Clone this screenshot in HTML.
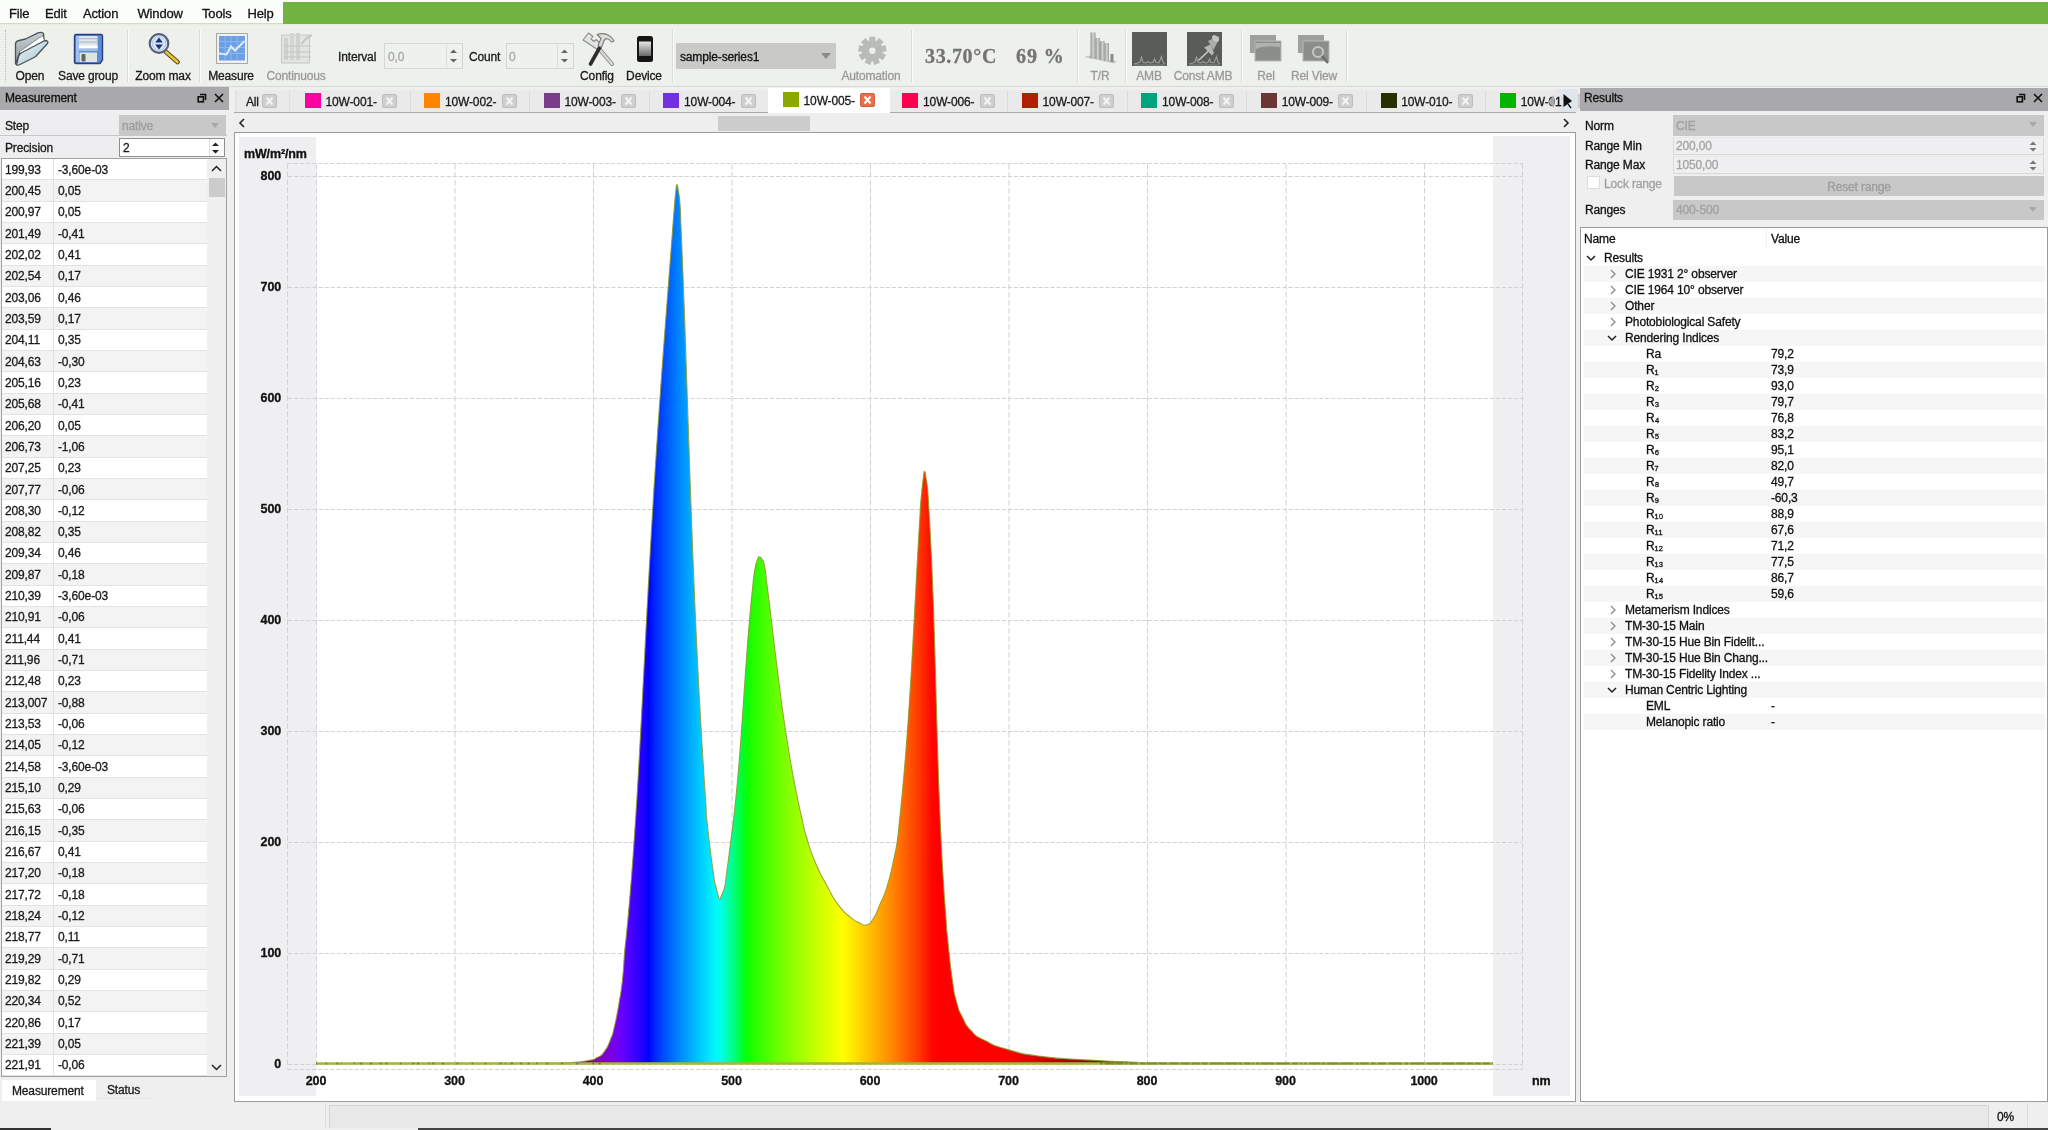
<!DOCTYPE html>
<html><head><meta charset="utf-8"><style>
*{margin:0;padding:0;box-sizing:border-box}
html,body{width:2048px;height:1130px;overflow:hidden;background:#f0eff0;font-family:"Liberation Sans",sans-serif;color:#1a1a1a}
#root{position:absolute;left:0;top:0;width:2048px;height:1130px;will-change:transform;-webkit-font-smoothing:antialiased}
.a{position:absolute}
.t{position:absolute;white-space:nowrap;font-size:12px;line-height:14px;-webkit-text-stroke:0.3px currentColor;letter-spacing:-0.15px}
.tb{position:absolute;white-space:nowrap;font-size:12px;line-height:14px;text-align:center;-webkit-text-stroke:0.3px currentColor;letter-spacing:-0.15px}
.dis{color:#9a9a9a}
</style></head><body><div id="root">
<div class="a" style="left:0;top:0;width:2048px;height:24px;background:#fbfdfb"></div>
<div class="a" style="left:283px;top:2px;width:1765px;height:22px;background:#71b341"></div>
<div class="a" style="left:0;top:23px;width:283px;height:1px;background:#cfdcc6"></div>
<div class="t" style="left:9px;top:6px;font-size:13px;line-height:15px;color:#111">File</div>
<div class="t" style="left:45px;top:6px;font-size:13px;line-height:15px;color:#111">Edit</div>
<div class="t" style="left:83px;top:6px;font-size:13px;line-height:15px;color:#111">Action</div>
<div class="t" style="left:137.5px;top:6px;font-size:13px;line-height:15px;color:#111">Window</div>
<div class="t" style="left:202px;top:6px;font-size:13px;line-height:15px;color:#111">Tools</div>
<div class="t" style="left:247.5px;top:6px;font-size:13px;line-height:15px;color:#111">Help</div>
<div class="a" style="left:0;top:24px;width:2048px;height:62px;background:#eef0ec"></div>
<div class="a" style="left:0;top:24px;width:2048px;height:1px;background:#e2f0d8"></div>
<div class="a" style="left:0;top:86px;width:2048px;height:1px;background:#d8d8d8"></div>
<div class="a" style="left:5px;top:30px;width:1px;height:52px;border-left:1px dotted #b8b8b8"></div>
<div class="a" style="left:127px;top:30px;width:1px;height:52px;background:#dadcd8"></div>
<div class="a" style="left:128px;top:30px;width:1px;height:52px;background:#fafbfa"></div>
<div class="a" style="left:199px;top:30px;width:1px;height:52px;background:#dadcd8"></div>
<div class="a" style="left:200px;top:30px;width:1px;height:52px;background:#fafbfa"></div>
<div class="a" style="left:672px;top:30px;width:1px;height:52px;background:#dadcd8"></div>
<div class="a" style="left:673px;top:30px;width:1px;height:52px;background:#fafbfa"></div>
<div class="a" style="left:911px;top:30px;width:1px;height:52px;background:#dadcd8"></div>
<div class="a" style="left:912px;top:30px;width:1px;height:52px;background:#fafbfa"></div>
<div class="a" style="left:1077px;top:30px;width:1px;height:52px;background:#dadcd8"></div>
<div class="a" style="left:1078px;top:30px;width:1px;height:52px;background:#fafbfa"></div>
<div class="a" style="left:1125px;top:30px;width:1px;height:52px;background:#dadcd8"></div>
<div class="a" style="left:1126px;top:30px;width:1px;height:52px;background:#fafbfa"></div>
<div class="a" style="left:1241px;top:30px;width:1px;height:52px;background:#dadcd8"></div>
<div class="a" style="left:1242px;top:30px;width:1px;height:52px;background:#fafbfa"></div>
<div class="a" style="left:1346px;top:30px;width:1px;height:52px;background:#dadcd8"></div>
<div class="a" style="left:1347px;top:30px;width:1px;height:52px;background:#fafbfa"></div>
<div class="tb" style="left:-30px;width:120px;top:69px;color:#1a1a1a">Open</div>
<div class="tb" style="left:28px;width:120px;top:69px;color:#1a1a1a">Save group</div>
<div class="tb" style="left:103px;width:120px;top:69px;color:#1a1a1a">Zoom max</div>
<div class="tb" style="left:171px;width:120px;top:69px;color:#1a1a1a">Measure</div>
<div class="tb" style="left:236px;width:120px;top:69px;color:#9a9a9a">Continuous</div>
<div class="tb" style="left:537px;width:120px;top:69px;color:#1a1a1a">Config</div>
<div class="tb" style="left:584px;width:120px;top:69px;color:#1a1a1a">Device</div>
<div class="tb" style="left:811px;width:120px;top:69px;color:#9a9a9a">Automation</div>
<div class="tb" style="left:1040px;width:120px;top:69px;color:#9a9a9a">T/R</div>
<div class="tb" style="left:1089px;width:120px;top:69px;color:#9a9a9a">AMB</div>
<div class="tb" style="left:1143px;width:120px;top:69px;color:#9a9a9a">Const AMB</div>
<div class="tb" style="left:1206px;width:120px;top:69px;color:#9a9a9a">Rel</div>
<div class="tb" style="left:1254px;width:120px;top:69px;color:#9a9a9a">Rel View</div>
<svg class="a" style="left:14px;top:31px" width="36" height="36" viewBox="0 0 36 36">
<defs><linearGradient id="fo" x1="0" y1="0" x2="1" y2="1"><stop offset="0" stop-color="#f2f6f8"/><stop offset="1" stop-color="#9cc4d0"/></linearGradient>
<linearGradient id="fb" x1="0" y1="0" x2="0" y2="1"><stop offset="0" stop-color="#c8d0d4"/><stop offset="1" stop-color="#8e9aa0"/></linearGradient></defs>
<path d="M1.5 33 L1.5 12.5 Q2 10 5 9.5 L11.5 8 L24 1.8 Q27.5 0.8 29.5 2.5 L30 8 L30 10 L6 21 Z" fill="url(#fb)" stroke="#4a5358" stroke-width="1.3" stroke-linejoin="round"/>
<path d="M5 21 L28.5 4.5 L30.5 9.5 L8 23 Z" fill="#ffffff" stroke="#6a7378" stroke-width=".8"/>
<path d="M2.5 34 Q4 34.5 6 33.5 L20 26.5 Q22 25.5 23.5 23.5 L33.5 12.5 Q34.5 10.5 32.5 9.5 L30 10 L8 21.5 Q5.5 23 4.5 25.5 Z" fill="url(#fo)" stroke="#4a5358" stroke-width="1.3" stroke-linejoin="round"/>
</svg>
<svg class="a" style="left:73px;top:33px" width="31" height="32" viewBox="0 0 31 32">
<path d="M1.5 3 Q1.5 1.5 3 1.5 L28 1.5 Q29.5 1.5 29.5 3 L29.5 27 L27 30.5 L3 30.5 Q1.5 30.5 1.5 29 Z" fill="#5a8ed8" stroke="#2c3f78" stroke-width="1.4"/>
<rect x="3" y="3" width="3" height="26" fill="#9cc0f0"/>
<rect x="6" y="3" width="18.5" height="14.5" fill="#dfe5e8"/>
<rect x="6" y="5" width="18.5" height="1.2" fill="#b5c0c6"/>
<rect x="6" y="8.5" width="18.5" height="1.2" fill="#b5c0c6"/>
<rect x="6" y="12.5" width="18.5" height="2.5" fill="#ffffff"/>
<rect x="6" y="15.5" width="18.5" height="2" fill="#9ec0e0"/>
<rect x="6.5" y="19.5" width="17.5" height="9.5" fill="#dfe3e5"/>
<rect x="8.5" y="21" width="4" height="7.5" rx="1" fill="#5f666c"/>
</svg>
<svg class="a" style="left:148px;top:33px" width="33" height="32" viewBox="0 0 33 32">
<line x1="18" y1="19" x2="29.5" y2="29" stroke="#5a4a18" stroke-width="4.6" stroke-linecap="round"/>
<line x1="18" y1="19" x2="29.5" y2="29" stroke="#e9c53c" stroke-width="2.6" stroke-linecap="round"/>
<circle cx="11" cy="10.5" r="9.3" fill="#e6eef8" stroke="#565c7a" stroke-width="2.2"/>
<circle cx="11" cy="10.5" r="6.8" fill="#d4e6f6" stroke="#a8c4e4" stroke-width="1"/>
<path d="M11 4.5 L14.8 9.5 H7.2Z M11 16.5 L14.8 11.5 H7.2Z" fill="#1a3278"/>
</svg>
<svg class="a" style="left:216px;top:33px" width="32" height="31" viewBox="0 0 32 31">
<rect x="0.5" y="0.5" width="31" height="30" fill="#f0f0f0" stroke="#a8a8a8" stroke-width="1"/>
<rect x="3" y="3" width="26" height="24.5" fill="#6c9fe6"/>
<path d="M3 8.5H29M3 14.5H29M3 20.5H29M9 3V27.5M15 3V27.5M21 3V27.5" stroke="#8cb8f0" stroke-width=".9"/>
<path d="M3 20.5 L10.5 21.5 L15 13.5 L19 17.5 L28.5 8" fill="none" stroke="#dfeaff" stroke-width="2"/>
</svg>
<svg class="a" style="left:281px;top:32px" width="33" height="32" viewBox="0 0 33 32">
<rect x="0.5" y="3" width="28" height="28" fill="#e2e4e2" stroke="#c6c8c6"/>
<rect x="3" y="6" width="4" height="22" fill="#cfd1cf"/><rect x="9" y="1" width="4" height="27" fill="#d4d6d4"/>
<rect x="15" y="1" width="4" height="27" fill="#d0d2d0"/>
<path d="M3 14H30M3 20H30M3 25H30" stroke="#c4c6c4" stroke-width="1.2"/>
<path d="M20 12 L26 6 L31 3" fill="none" stroke="#c0c2c0" stroke-width="1.6"/>
</svg>
<svg class="a" style="left:581px;top:31px" width="36" height="36" viewBox="0 0 36 36">
<path d="M17.5 17 L31 33" stroke="#8e8e8e" stroke-width="4.2" stroke-linecap="round"/>
<path d="M17.5 17 L31 33" stroke="#d8d8d8" stroke-width="2.4" stroke-linecap="round"/>
<path d="M2 9 L7.5 2 L12 5.5 L10 8 L13 10.5 L15 8.5 L20 13 L16.5 18.5 Z" fill="#e4e4e4" stroke="#8a8a8a" stroke-width="1.1" stroke-linejoin="round"/>
<path d="M19 16 L9.5 33" stroke="#2e2e2e" stroke-width="3.6" stroke-linecap="round"/>
<path d="M16 3.5 Q22 1.5 27 4 Q31 6 33 10 L30.5 11 Q28.5 8 25 7.5 L23 9.5 L20.5 16.5 L17 14.5 L20 7.5 Z" fill="#dcdcdc" stroke="#7a7a7a" stroke-width="1.1" stroke-linejoin="round"/>
</svg>
<svg class="a" style="left:636px;top:35px" width="18" height="28" viewBox="0 0 18 28">
<defs><linearGradient id="dv" x1="0" y1="0" x2="0" y2="1"><stop offset="0" stop-color="#e8e8e8"/><stop offset="1" stop-color="#6a6a6a"/></linearGradient></defs>
<rect x="1" y="1" width="16" height="26" rx="2.5" fill="#151515"/>
<rect x="3" y="6.5" width="12" height="14.5" fill="url(#dv)"/>
</svg>
<svg class="a" style="left:857px;top:36px" width="31" height="30" viewBox="0 0 31 30"><g transform="translate(15.3 14.7)" fill="#b9bbb7"><circle r="10.5"/><rect x="-3" y="-14" width="6" height="6" transform="rotate(0)"/><rect x="-3" y="-14" width="6" height="6" transform="rotate(40)"/><rect x="-3" y="-14" width="6" height="6" transform="rotate(80)"/><rect x="-3" y="-14" width="6" height="6" transform="rotate(120)"/><rect x="-3" y="-14" width="6" height="6" transform="rotate(160)"/><rect x="-3" y="-14" width="6" height="6" transform="rotate(200)"/><rect x="-3" y="-14" width="6" height="6" transform="rotate(240)"/><rect x="-3" y="-14" width="6" height="6" transform="rotate(280)"/><rect x="-3" y="-14" width="6" height="6" transform="rotate(320)"/></g><circle cx="15.3" cy="14.7" r="3.2" fill="#eef0ec"/></svg>
<svg class="a" style="left:1084px;top:32px" width="34" height="34" viewBox="0 0 34 34">
<defs><linearGradient id="trg" x1="0" y1="0" x2="1" y2="0"><stop offset="0" stop-color="#8e908e"/><stop offset=".5" stop-color="#d4d6d4"/><stop offset="1" stop-color="#9a9c9a"/></linearGradient></defs>
<path d="M0.5 25 L4 23.5 L33 29.5 L30 31.5 Z" fill="#c4c6c4"/>
<rect x="6.5" y="0.5" width="5" height="26" fill="url(#trg)"/>
<rect x="11.5" y="6" width="4.5" height="21" fill="url(#trg)"/>
<rect x="16" y="9" width="4.5" height="19" fill="url(#trg)"/>
<rect x="20.5" y="11" width="4.5" height="18" fill="url(#trg)"/>
<rect x="26.5" y="22" width="3" height="8" fill="#8a8c8a"/>
</svg>
<svg class="a" style="left:1132px;top:32px" width="35" height="35" viewBox="0 0 35 35">
<rect x="0" y="0" width="35" height="34" fill="#585d57"/>
<path d="M2 32 L6 31 L8 30 L9.5 25 L11 30.5 L14 31 L16 29.5 L18 31 L21 30.5 L22.5 27 L24 30.5 L27 31 L29.5 24.5 L31 30.5 L33 32" fill="none" stroke="#9a9e9a" stroke-width="1.1"/><path d="M2 33 H33" stroke="#7e827e" stroke-width="1.2"/>
</svg>
<svg class="a" style="left:1187px;top:32px" width="35" height="35" viewBox="0 0 35 35">
<rect x="0" y="0" width="35" height="34" fill="#585d57"/>
<path d="M2 32 L6 31 L8 30 L9.5 25 L11 30.5 L14 31 L16 29.5 L18 31 L21 30.5 L22.5 27 L24 30.5 L27 31 L29.5 24.5 L31 30.5 L33 32" fill="none" stroke="#9a9e9a" stroke-width="1.1"/><path d="M2 33 H33" stroke="#7e827e" stroke-width="1.2"/>
<path d="M21.5 19 L12 28" stroke="#c8ccc8" stroke-width="1.6" stroke-linecap="round"/>
<path d="M17 15.5 L25 23.5 L27 21 L23.5 12.5 Z" fill="#b4b8b4"/>
<path d="M21 9 L31 4 Q33 5 31.5 8 L26.5 18 Z" fill="#a9ada9"/>
<ellipse cx="28.5" cy="6.5" rx="4" ry="2.6" transform="rotate(45 28.5 6.5)" fill="#c4c8c4"/>
</svg>
<svg class="a" style="left:1250px;top:35px" width="32" height="27" viewBox="0 0 32 27">
<rect x="0" y="0" width="26" height="18" fill="#9ea09e"/>
<rect x="5" y="6" width="26" height="20" fill="#8c8e8c" stroke="#b8bab8"/>
<path d="M6 14 Q15 10 30 12 L30 8 L6 8Z" fill="#b0b2b0"/>
</svg>
<svg class="a" style="left:1298px;top:35px" width="33" height="30" viewBox="0 0 33 30">
<rect x="0" y="0" width="26" height="18" fill="#9ea09e"/>
<rect x="5" y="6" width="26" height="20" fill="#8c8e8c" stroke="#b8bab8"/>
<circle cx="20" cy="17" r="5" fill="none" stroke="#c4c6c4" stroke-width="2"/>
<line x1="24" y1="21" x2="30" y2="28" stroke="#6a6c6a" stroke-width="2.5"/>
</svg>
<div class="t" style="left:338px;top:50px">Interval</div>
<div class="a" style="left:384px;top:43px;width:79px;height:26px;border:1px solid #d4d6d2;background:#eff1ed"></div>
<div class="t dis" style="left:388px;top:50px;color:#a8a8a8">0,0</div>
<div class="t" style="left:469px;top:50px">Count</div>
<div class="a" style="left:506px;top:43px;width:68px;height:26px;border:1px solid #d4d6d2;background:#eff1ed"></div>
<div class="t dis" style="left:509px;top:50px;color:#a8a8a8">0</div>
<div class="a" style="left:446px;top:45px;width:14px;height:22px;border-left:1px solid #dcdcdc"></div>
<svg class="a" style="left:449px;top:48px" width="9" height="16" viewBox="0 0 9 16"><path d="M1 5 L4.5 1.5 L8 5Z M1 11 L4.5 14.5 L8 11Z" fill="#666"/></svg>
<div class="a" style="left:557px;top:45px;width:14px;height:22px;border-left:1px solid #dcdcdc"></div>
<svg class="a" style="left:560px;top:48px" width="9" height="16" viewBox="0 0 9 16"><path d="M1 5 L4.5 1.5 L8 5Z M1 11 L4.5 14.5 L8 11Z" fill="#666"/></svg>
<div class="a" style="left:676px;top:43px;width:160px;height:26px;background:#c9cac7"></div>
<div class="t" style="left:680px;top:50px;color:#111">sample-series1</div>
<svg class="a" style="left:821px;top:53px" width="10" height="6" viewBox="0 0 10 6"><path d="M0 0 L10 0 L5 6Z" fill="#8a8a8a"/></svg>
<div class="t" style="left:925px;top:45px;font-family:'Liberation Serif',serif;font-size:20px;line-height:22px;font-weight:bold;letter-spacing:0.65px;color:#747474">33.70°C</div>
<div class="t" style="left:1016px;top:45px;font-family:'Liberation Serif',serif;font-size:20px;line-height:22px;font-weight:bold;letter-spacing:0.9px;color:#747474">69 %</div>
<div class="a" style="left:0;top:87px;width:229px;height:23px;background:#a9a8aa"></div>
<div class="t" style="left:5px;top:91px;color:#111">Measurement</div>
<svg class="a" style="left:197px;top:93px" width="10" height="10" viewBox="0 0 10 10"><path d="M3 1.5H8.5V7" fill="none" stroke="#111" stroke-width="1.6"/><rect x="1.2" y="3.8" width="5.2" height="5" fill="none" stroke="#111" stroke-width="1.6"/></svg><svg class="a" style="left:214px;top:93px" width="10" height="10" viewBox="0 0 10 10"><path d="M1 1L9 9M9 1L1 9" stroke="#111" stroke-width="1.6"/></svg>
<div class="a" style="left:0;top:113px;width:119px;height:23px;background:#eeedef"></div>
<div class="a" style="left:0;top:135px;width:227px;height:1px;background:#c8c8c8"></div>
<div class="t" style="left:5px;top:119px">Step</div>
<div class="a" style="left:119px;top:115px;width:107px;height:20px;background:#c9c8c9"></div>
<div class="t" style="left:122px;top:119px;color:#9c9c9c">native</div>
<svg class="a" style="left:211px;top:123px" width="8" height="5" viewBox="0 0 8 5"><path d="M0 0H8L4 5Z" fill="#a8a8a8"/></svg>
<div class="a" style="left:0;top:137px;width:119px;height:20px;background:#eeedef"></div>
<div class="t" style="left:5px;top:141px">Precision</div>
<div class="a" style="left:119px;top:138px;width:106px;height:19px;background:#fff;border:1px solid #8e8e8e"></div>
<div class="t" style="left:123px;top:141px">2</div>
<div class="a" style="left:209px;top:139px;width:15px;height:17px;border-left:1px solid #e0e0e0;background:#fafafa"></div>
<svg class="a" style="left:211px;top:141px" width="9" height="14" viewBox="0 0 9 14"><path d="M1 5 L4.5 1.5 L8 5Z M1 9 L4.5 12.5 L8 9Z" fill="#222"/></svg>
<div class="a" style="left:1px;top:158px;width:226px;height:919px;background:#fff;border:1px solid #a0a0a0"></div>
<div class="a" style="left:2px;top:159.00px;width:205px;height:21.33px;background:#ffffff;border-bottom:1px solid #e2e2e2"></div>
<div class="t" style="left:5px;top:162.50px">199,93</div>
<div class="t" style="left:58px;top:162.50px">-3,60e-03</div>
<div class="a" style="left:2px;top:180.33px;width:205px;height:21.33px;background:#f4f3f4;border-bottom:1px solid #e2e2e2"></div>
<div class="t" style="left:5px;top:183.83px">200,45</div>
<div class="t" style="left:58px;top:183.83px">0,05</div>
<div class="a" style="left:2px;top:201.67px;width:205px;height:21.33px;background:#ffffff;border-bottom:1px solid #e2e2e2"></div>
<div class="t" style="left:5px;top:205.17px">200,97</div>
<div class="t" style="left:58px;top:205.17px">0,05</div>
<div class="a" style="left:2px;top:223.00px;width:205px;height:21.33px;background:#f4f3f4;border-bottom:1px solid #e2e2e2"></div>
<div class="t" style="left:5px;top:226.50px">201,49</div>
<div class="t" style="left:58px;top:226.50px">-0,41</div>
<div class="a" style="left:2px;top:244.33px;width:205px;height:21.33px;background:#ffffff;border-bottom:1px solid #e2e2e2"></div>
<div class="t" style="left:5px;top:247.83px">202,02</div>
<div class="t" style="left:58px;top:247.83px">0,41</div>
<div class="a" style="left:2px;top:265.66px;width:205px;height:21.33px;background:#f4f3f4;border-bottom:1px solid #e2e2e2"></div>
<div class="t" style="left:5px;top:269.16px">202,54</div>
<div class="t" style="left:58px;top:269.16px">0,17</div>
<div class="a" style="left:2px;top:287.00px;width:205px;height:21.33px;background:#ffffff;border-bottom:1px solid #e2e2e2"></div>
<div class="t" style="left:5px;top:290.50px">203,06</div>
<div class="t" style="left:58px;top:290.50px">0,46</div>
<div class="a" style="left:2px;top:308.33px;width:205px;height:21.33px;background:#f4f3f4;border-bottom:1px solid #e2e2e2"></div>
<div class="t" style="left:5px;top:311.83px">203,59</div>
<div class="t" style="left:58px;top:311.83px">0,17</div>
<div class="a" style="left:2px;top:329.66px;width:205px;height:21.33px;background:#ffffff;border-bottom:1px solid #e2e2e2"></div>
<div class="t" style="left:5px;top:333.16px">204,11</div>
<div class="t" style="left:58px;top:333.16px">0,35</div>
<div class="a" style="left:2px;top:351.00px;width:205px;height:21.33px;background:#f4f3f4;border-bottom:1px solid #e2e2e2"></div>
<div class="t" style="left:5px;top:354.50px">204,63</div>
<div class="t" style="left:58px;top:354.50px">-0,30</div>
<div class="a" style="left:2px;top:372.33px;width:205px;height:21.33px;background:#ffffff;border-bottom:1px solid #e2e2e2"></div>
<div class="t" style="left:5px;top:375.83px">205,16</div>
<div class="t" style="left:58px;top:375.83px">0,23</div>
<div class="a" style="left:2px;top:393.66px;width:205px;height:21.33px;background:#f4f3f4;border-bottom:1px solid #e2e2e2"></div>
<div class="t" style="left:5px;top:397.16px">205,68</div>
<div class="t" style="left:58px;top:397.16px">-0,41</div>
<div class="a" style="left:2px;top:415.00px;width:205px;height:21.33px;background:#ffffff;border-bottom:1px solid #e2e2e2"></div>
<div class="t" style="left:5px;top:418.50px">206,20</div>
<div class="t" style="left:58px;top:418.50px">0,05</div>
<div class="a" style="left:2px;top:436.33px;width:205px;height:21.33px;background:#f4f3f4;border-bottom:1px solid #e2e2e2"></div>
<div class="t" style="left:5px;top:439.83px">206,73</div>
<div class="t" style="left:58px;top:439.83px">-1,06</div>
<div class="a" style="left:2px;top:457.66px;width:205px;height:21.33px;background:#ffffff;border-bottom:1px solid #e2e2e2"></div>
<div class="t" style="left:5px;top:461.16px">207,25</div>
<div class="t" style="left:58px;top:461.16px">0,23</div>
<div class="a" style="left:2px;top:479.00px;width:205px;height:21.33px;background:#f4f3f4;border-bottom:1px solid #e2e2e2"></div>
<div class="t" style="left:5px;top:482.50px">207,77</div>
<div class="t" style="left:58px;top:482.50px">-0,06</div>
<div class="a" style="left:2px;top:500.33px;width:205px;height:21.33px;background:#ffffff;border-bottom:1px solid #e2e2e2"></div>
<div class="t" style="left:5px;top:503.83px">208,30</div>
<div class="t" style="left:58px;top:503.83px">-0,12</div>
<div class="a" style="left:2px;top:521.66px;width:205px;height:21.33px;background:#f4f3f4;border-bottom:1px solid #e2e2e2"></div>
<div class="t" style="left:5px;top:525.16px">208,82</div>
<div class="t" style="left:58px;top:525.16px">0,35</div>
<div class="a" style="left:2px;top:542.99px;width:205px;height:21.33px;background:#ffffff;border-bottom:1px solid #e2e2e2"></div>
<div class="t" style="left:5px;top:546.49px">209,34</div>
<div class="t" style="left:58px;top:546.49px">0,46</div>
<div class="a" style="left:2px;top:564.33px;width:205px;height:21.33px;background:#f4f3f4;border-bottom:1px solid #e2e2e2"></div>
<div class="t" style="left:5px;top:567.83px">209,87</div>
<div class="t" style="left:58px;top:567.83px">-0,18</div>
<div class="a" style="left:2px;top:585.66px;width:205px;height:21.33px;background:#ffffff;border-bottom:1px solid #e2e2e2"></div>
<div class="t" style="left:5px;top:589.16px">210,39</div>
<div class="t" style="left:58px;top:589.16px">-3,60e-03</div>
<div class="a" style="left:2px;top:606.99px;width:205px;height:21.33px;background:#f4f3f4;border-bottom:1px solid #e2e2e2"></div>
<div class="t" style="left:5px;top:610.49px">210,91</div>
<div class="t" style="left:58px;top:610.49px">-0,06</div>
<div class="a" style="left:2px;top:628.33px;width:205px;height:21.33px;background:#ffffff;border-bottom:1px solid #e2e2e2"></div>
<div class="t" style="left:5px;top:631.83px">211,44</div>
<div class="t" style="left:58px;top:631.83px">0,41</div>
<div class="a" style="left:2px;top:649.66px;width:205px;height:21.33px;background:#f4f3f4;border-bottom:1px solid #e2e2e2"></div>
<div class="t" style="left:5px;top:653.16px">211,96</div>
<div class="t" style="left:58px;top:653.16px">-0,71</div>
<div class="a" style="left:2px;top:670.99px;width:205px;height:21.33px;background:#ffffff;border-bottom:1px solid #e2e2e2"></div>
<div class="t" style="left:5px;top:674.49px">212,48</div>
<div class="t" style="left:58px;top:674.49px">0,23</div>
<div class="a" style="left:2px;top:692.32px;width:205px;height:21.33px;background:#f4f3f4;border-bottom:1px solid #e2e2e2"></div>
<div class="t" style="left:5px;top:695.82px">213,007</div>
<div class="t" style="left:58px;top:695.82px">-0,88</div>
<div class="a" style="left:2px;top:713.66px;width:205px;height:21.33px;background:#ffffff;border-bottom:1px solid #e2e2e2"></div>
<div class="t" style="left:5px;top:717.16px">213,53</div>
<div class="t" style="left:58px;top:717.16px">-0,06</div>
<div class="a" style="left:2px;top:734.99px;width:205px;height:21.33px;background:#f4f3f4;border-bottom:1px solid #e2e2e2"></div>
<div class="t" style="left:5px;top:738.49px">214,05</div>
<div class="t" style="left:58px;top:738.49px">-0,12</div>
<div class="a" style="left:2px;top:756.32px;width:205px;height:21.33px;background:#ffffff;border-bottom:1px solid #e2e2e2"></div>
<div class="t" style="left:5px;top:759.82px">214,58</div>
<div class="t" style="left:58px;top:759.82px">-3,60e-03</div>
<div class="a" style="left:2px;top:777.66px;width:205px;height:21.33px;background:#f4f3f4;border-bottom:1px solid #e2e2e2"></div>
<div class="t" style="left:5px;top:781.16px">215,10</div>
<div class="t" style="left:58px;top:781.16px">0,29</div>
<div class="a" style="left:2px;top:798.99px;width:205px;height:21.33px;background:#ffffff;border-bottom:1px solid #e2e2e2"></div>
<div class="t" style="left:5px;top:802.49px">215,63</div>
<div class="t" style="left:58px;top:802.49px">-0,06</div>
<div class="a" style="left:2px;top:820.32px;width:205px;height:21.33px;background:#f4f3f4;border-bottom:1px solid #e2e2e2"></div>
<div class="t" style="left:5px;top:823.82px">216,15</div>
<div class="t" style="left:58px;top:823.82px">-0,35</div>
<div class="a" style="left:2px;top:841.66px;width:205px;height:21.33px;background:#ffffff;border-bottom:1px solid #e2e2e2"></div>
<div class="t" style="left:5px;top:845.16px">216,67</div>
<div class="t" style="left:58px;top:845.16px">0,41</div>
<div class="a" style="left:2px;top:862.99px;width:205px;height:21.33px;background:#f4f3f4;border-bottom:1px solid #e2e2e2"></div>
<div class="t" style="left:5px;top:866.49px">217,20</div>
<div class="t" style="left:58px;top:866.49px">-0,18</div>
<div class="a" style="left:2px;top:884.32px;width:205px;height:21.33px;background:#ffffff;border-bottom:1px solid #e2e2e2"></div>
<div class="t" style="left:5px;top:887.82px">217,72</div>
<div class="t" style="left:58px;top:887.82px">-0,18</div>
<div class="a" style="left:2px;top:905.65px;width:205px;height:21.33px;background:#f4f3f4;border-bottom:1px solid #e2e2e2"></div>
<div class="t" style="left:5px;top:909.15px">218,24</div>
<div class="t" style="left:58px;top:909.15px">-0,12</div>
<div class="a" style="left:2px;top:926.99px;width:205px;height:21.33px;background:#ffffff;border-bottom:1px solid #e2e2e2"></div>
<div class="t" style="left:5px;top:930.49px">218,77</div>
<div class="t" style="left:58px;top:930.49px">0,11</div>
<div class="a" style="left:2px;top:948.32px;width:205px;height:21.33px;background:#f4f3f4;border-bottom:1px solid #e2e2e2"></div>
<div class="t" style="left:5px;top:951.82px">219,29</div>
<div class="t" style="left:58px;top:951.82px">-0,71</div>
<div class="a" style="left:2px;top:969.65px;width:205px;height:21.33px;background:#ffffff;border-bottom:1px solid #e2e2e2"></div>
<div class="t" style="left:5px;top:973.15px">219,82</div>
<div class="t" style="left:58px;top:973.15px">0,29</div>
<div class="a" style="left:2px;top:990.99px;width:205px;height:21.33px;background:#f4f3f4;border-bottom:1px solid #e2e2e2"></div>
<div class="t" style="left:5px;top:994.49px">220,34</div>
<div class="t" style="left:58px;top:994.49px">0,52</div>
<div class="a" style="left:2px;top:1012.32px;width:205px;height:21.33px;background:#ffffff;border-bottom:1px solid #e2e2e2"></div>
<div class="t" style="left:5px;top:1015.82px">220,86</div>
<div class="t" style="left:58px;top:1015.82px">0,17</div>
<div class="a" style="left:2px;top:1033.65px;width:205px;height:21.33px;background:#f4f3f4;border-bottom:1px solid #e2e2e2"></div>
<div class="t" style="left:5px;top:1037.15px">221,39</div>
<div class="t" style="left:58px;top:1037.15px">0,05</div>
<div class="a" style="left:2px;top:1054.99px;width:205px;height:21.33px;background:#ffffff;border-bottom:1px solid #e2e2e2"></div>
<div class="t" style="left:5px;top:1058.49px">221,91</div>
<div class="t" style="left:58px;top:1058.49px">-0,06</div>
<div class="a" style="left:53px;top:159px;width:1px;height:917px;background:#e2e2e2"></div>
<div class="a" style="left:207px;top:159px;width:19px;height:917px;background:#f0eff0"></div>
<div class="a" style="left:209px;top:178px;width:16px;height:19px;background:#cdcccd"></div>
<svg class="a" style="left:211px;top:165px" width="11" height="7" viewBox="0 0 11 7"><path d="M1 6L5.5 1.5L10 6" fill="none" stroke="#222" stroke-width="1.5"/></svg>
<svg class="a" style="left:211px;top:1064px" width="11" height="7" viewBox="0 0 11 7"><path d="M1 1L5.5 5.5L10 1" fill="none" stroke="#222" stroke-width="1.5"/></svg>
<div class="a" style="left:2px;top:1080px;width:94px;height:21px;background:#ffffff"></div>
<div class="t" style="left:12px;top:1084px">Measurement</div>
<div class="a" style="left:96px;top:1080px;width:56px;height:19px;background:#f0eff0;border-bottom:1px solid #e6e6e6"></div>
<div class="t" style="left:107px;top:1083px">Status</div>
<div class="a" style="left:234px;top:90px;width:1342px;height:22px;background:#ebeaeb"></div>
<div class="a" style="left:234px;top:112px;width:1342px;height:1px;background:#a8a8a8"></div>
<div class="a" style="left:236px;top:90px;width:54px;height:22px;border-left:1px solid #dedede;border-right:1px solid #dedede"></div>
<div class="t" style="left:246px;top:95px">All</div>
<div class="a" style="left:262px;top:94px;width:15px;height:14px;background:#cfcfcf;border-radius:2px;border:1px solid #bdbdbd"></div><svg class="a" style="left:262px;top:94px" width="15" height="14" viewBox="0 0 15 14"><path d="M4.5 3.5L10.5 10.5M10.5 3.5L4.5 10.5" stroke="#f4f4f4" stroke-width="2"/></svg>
<div class="a" style="left:409.7px;top:91px;width:1px;height:21px;background:#dcdcdc"></div>
<div class="a" style="left:304.8px;top:92.8px;width:16px;height:15.6px;background:#ff00a0"></div>
<div class="t" style="left:325.5px;top:95px">10W-001-</div>
<div class="a" style="left:382px;top:94px;width:15px;height:14px;background:#cfcfcf;border-radius:2px;border:1px solid #bdbdbd"></div><svg class="a" style="left:382px;top:94px" width="15" height="14" viewBox="0 0 15 14"><path d="M4.5 3.5L10.5 10.5M10.5 3.5L4.5 10.5" stroke="#f4f4f4" stroke-width="2"/></svg>
<div class="a" style="left:529.2px;top:91px;width:1px;height:21px;background:#dcdcdc"></div>
<div class="a" style="left:424.3px;top:92.8px;width:16px;height:15.6px;background:#ff8400"></div>
<div class="t" style="left:445.0px;top:95px">10W-002-</div>
<div class="a" style="left:502px;top:94px;width:15px;height:14px;background:#cfcfcf;border-radius:2px;border:1px solid #bdbdbd"></div><svg class="a" style="left:502px;top:94px" width="15" height="14" viewBox="0 0 15 14"><path d="M4.5 3.5L10.5 10.5M10.5 3.5L4.5 10.5" stroke="#f4f4f4" stroke-width="2"/></svg>
<div class="a" style="left:648.7px;top:91px;width:1px;height:21px;background:#dcdcdc"></div>
<div class="a" style="left:543.8px;top:92.8px;width:16px;height:15.6px;background:#7a3d8a"></div>
<div class="t" style="left:564.5px;top:95px">10W-003-</div>
<div class="a" style="left:621px;top:94px;width:15px;height:14px;background:#cfcfcf;border-radius:2px;border:1px solid #bdbdbd"></div><svg class="a" style="left:621px;top:94px" width="15" height="14" viewBox="0 0 15 14"><path d="M4.5 3.5L10.5 10.5M10.5 3.5L4.5 10.5" stroke="#f4f4f4" stroke-width="2"/></svg>
<div class="a" style="left:768.3px;top:91px;width:1px;height:21px;background:#dcdcdc"></div>
<div class="a" style="left:663.4px;top:92.8px;width:16px;height:15.6px;background:#7230de"></div>
<div class="t" style="left:684.1px;top:95px">10W-004-</div>
<div class="a" style="left:741px;top:94px;width:15px;height:14px;background:#cfcfcf;border-radius:2px;border:1px solid #bdbdbd"></div><svg class="a" style="left:741px;top:94px" width="15" height="14" viewBox="0 0 15 14"><path d="M4.5 3.5L10.5 10.5M10.5 3.5L4.5 10.5" stroke="#f4f4f4" stroke-width="2"/></svg>
<div class="a" style="left:768.1px;top:88px;width:122px;height:25px;background:#ffffff"></div>
<div class="a" style="left:782.9px;top:91.8px;width:16px;height:15.6px;background:#8aa800"></div>
<div class="t" style="left:803.6px;top:94px">10W-005-</div>
<div class="a" style="left:860px;top:93px;width:15px;height:14px;background:#e8704a;border-radius:2px;border:1px solid #d0603a"></div><svg class="a" style="left:860px;top:93px" width="15" height="14" viewBox="0 0 15 14"><path d="M4.5 3.5L10.5 10.5M10.5 3.5L4.5 10.5" stroke="#fff" stroke-width="2"/></svg>
<div class="a" style="left:1007.3px;top:91px;width:1px;height:21px;background:#dcdcdc"></div>
<div class="a" style="left:902.4px;top:92.8px;width:16px;height:15.6px;background:#ff0050"></div>
<div class="t" style="left:923.1px;top:95px">10W-006-</div>
<div class="a" style="left:980px;top:94px;width:15px;height:14px;background:#cfcfcf;border-radius:2px;border:1px solid #bdbdbd"></div><svg class="a" style="left:980px;top:94px" width="15" height="14" viewBox="0 0 15 14"><path d="M4.5 3.5L10.5 10.5M10.5 3.5L4.5 10.5" stroke="#f4f4f4" stroke-width="2"/></svg>
<div class="a" style="left:1126.8px;top:91px;width:1px;height:21px;background:#dcdcdc"></div>
<div class="a" style="left:1021.9px;top:92.8px;width:16px;height:15.6px;background:#b02000"></div>
<div class="t" style="left:1042.6px;top:95px">10W-007-</div>
<div class="a" style="left:1099px;top:94px;width:15px;height:14px;background:#cfcfcf;border-radius:2px;border:1px solid #bdbdbd"></div><svg class="a" style="left:1099px;top:94px" width="15" height="14" viewBox="0 0 15 14"><path d="M4.5 3.5L10.5 10.5M10.5 3.5L4.5 10.5" stroke="#f4f4f4" stroke-width="2"/></svg>
<div class="a" style="left:1246.3px;top:91px;width:1px;height:21px;background:#dcdcdc"></div>
<div class="a" style="left:1141.4px;top:92.8px;width:16px;height:15.6px;background:#00a67a"></div>
<div class="t" style="left:1162.1px;top:95px">10W-008-</div>
<div class="a" style="left:1219px;top:94px;width:15px;height:14px;background:#cfcfcf;border-radius:2px;border:1px solid #bdbdbd"></div><svg class="a" style="left:1219px;top:94px" width="15" height="14" viewBox="0 0 15 14"><path d="M4.5 3.5L10.5 10.5M10.5 3.5L4.5 10.5" stroke="#f4f4f4" stroke-width="2"/></svg>
<div class="a" style="left:1365.9px;top:91px;width:1px;height:21px;background:#dcdcdc"></div>
<div class="a" style="left:1261.0px;top:92.8px;width:16px;height:15.6px;background:#6e3535"></div>
<div class="t" style="left:1281.7px;top:95px">10W-009-</div>
<div class="a" style="left:1338px;top:94px;width:15px;height:14px;background:#cfcfcf;border-radius:2px;border:1px solid #bdbdbd"></div><svg class="a" style="left:1338px;top:94px" width="15" height="14" viewBox="0 0 15 14"><path d="M4.5 3.5L10.5 10.5M10.5 3.5L4.5 10.5" stroke="#f4f4f4" stroke-width="2"/></svg>
<div class="a" style="left:1485.4px;top:91px;width:1px;height:21px;background:#dcdcdc"></div>
<div class="a" style="left:1380.5px;top:92.8px;width:16px;height:15.6px;background:#283000"></div>
<div class="t" style="left:1401.2px;top:95px">10W-010-</div>
<div class="a" style="left:1458px;top:94px;width:15px;height:14px;background:#cfcfcf;border-radius:2px;border:1px solid #bdbdbd"></div><svg class="a" style="left:1458px;top:94px" width="15" height="14" viewBox="0 0 15 14"><path d="M4.5 3.5L10.5 10.5M10.5 3.5L4.5 10.5" stroke="#f4f4f4" stroke-width="2"/></svg>
<div class="a" style="left:1604.9px;top:91px;width:1px;height:21px;background:#dcdcdc"></div>
<div class="a" style="left:1500.0px;top:92.8px;width:16px;height:15.6px;background:#00b400"></div>
<div class="t" style="left:1520.7px;top:95px">10W-011-</div>
<div class="a" style="left:1577px;top:94px;width:15px;height:14px;background:#cfcfcf;border-radius:2px;border:1px solid #bdbdbd"></div><svg class="a" style="left:1577px;top:94px" width="15" height="14" viewBox="0 0 15 14"><path d="M4.5 3.5L10.5 10.5M10.5 3.5L4.5 10.5" stroke="#f4f4f4" stroke-width="2"/></svg>
<div class="a" style="left:1553px;top:89px;width:25px;height:23px;background:linear-gradient(90deg,rgba(230,236,240,0.2),#dde4ea 40%,#dfe6ec)"></div>
<svg class="a" style="left:1546px;top:93px" width="10" height="16" viewBox="0 0 10 16"><path d="M8 2 L2 9 L8 15Z" fill="#a8a8a8"/></svg>
<div class="t" style="left:1555px;top:95px">1</div>
<svg class="a" style="left:1562px;top:92px" width="12" height="18" viewBox="0 0 12 18"><path d="M1.5 2 L1.5 15 L10 9Z" fill="#111"/><path d="M6 12 L9 16" stroke="#111" stroke-width="1.3"/></svg>
<div class="a" style="left:234px;top:113px;width:1342px;height:19px;background:#efeeef"></div>
<div class="a" style="left:718px;top:116px;width:92px;height:15px;background:#cdcccd"></div>
<svg class="a" style="left:238px;top:118px" width="8" height="10" viewBox="0 0 8 10"><path d="M6 1L2 5L6 9" fill="none" stroke="#222" stroke-width="1.6"/></svg>
<svg class="a" style="left:1562px;top:118px" width="8" height="10" viewBox="0 0 8 10"><path d="M2 1L6 5L2 9" fill="none" stroke="#222" stroke-width="1.6"/></svg>
<div class="a" style="left:234px;top:131.5px;width:1342px;height:1px;background:#9a9a9a"></div>
<div class="a" style="left:234px;top:132.5px;width:1342px;height:969px;background:#fff;border:1px solid #9c9c9c;border-top:none"></div>
<div class="a" style="left:239px;top:137px;width:77px;height:959px;background:#efeef0"></div>
<div class="a" style="left:1493px;top:136px;width:77px;height:960px;background:#efeef0"></div>
<svg class="a" style="left:0;top:0" width="2048" height="1130" viewBox="0 0 2048 1130">
<defs><linearGradient id="spec" gradientUnits="userSpaceOnUse" x1="316.0" y1="0" x2="1493.0" y2="0"><stop offset="0.1647" stop-color="rgb(0,0,0)"/><stop offset="0.1694" stop-color="rgb(0,0,0)"/><stop offset="0.1742" stop-color="rgb(0,0,0)"/><stop offset="0.1789" stop-color="rgb(0,0,0)"/><stop offset="0.1836" stop-color="rgb(0,0,0)"/><stop offset="0.1883" stop-color="rgb(0,0,0)"/><stop offset="0.1930" stop-color="rgb(0,0,0)"/><stop offset="0.1977" stop-color="rgb(0,0,0)"/><stop offset="0.2024" stop-color="rgb(0,0,0)"/><stop offset="0.2071" stop-color="rgb(0,0,0)"/><stop offset="0.2118" stop-color="rgb(97,0,97)"/><stop offset="0.2165" stop-color="rgb(109,0,115)"/><stop offset="0.2212" stop-color="rgb(118,0,132)"/><stop offset="0.2259" stop-color="rgb(124,0,149)"/><stop offset="0.2306" stop-color="rgb(129,0,165)"/><stop offset="0.2353" stop-color="rgb(131,0,181)"/><stop offset="0.2401" stop-color="rgb(130,0,196)"/><stop offset="0.2448" stop-color="rgb(128,0,211)"/><stop offset="0.2495" stop-color="rgb(123,0,226)"/><stop offset="0.2542" stop-color="rgb(116,0,241)"/><stop offset="0.2589" stop-color="rgb(106,0,255)"/><stop offset="0.2636" stop-color="rgb(89,0,255)"/><stop offset="0.2683" stop-color="rgb(70,0,255)"/><stop offset="0.2730" stop-color="rgb(51,0,255)"/><stop offset="0.2777" stop-color="rgb(29,0,255)"/><stop offset="0.2824" stop-color="rgb(0,0,255)"/><stop offset="0.2871" stop-color="rgb(0,34,255)"/><stop offset="0.2918" stop-color="rgb(0,59,255)"/><stop offset="0.2965" stop-color="rgb(0,81,255)"/><stop offset="0.3012" stop-color="rgb(0,102,255)"/><stop offset="0.3059" stop-color="rgb(0,123,255)"/><stop offset="0.3107" stop-color="rgb(0,142,255)"/><stop offset="0.3154" stop-color="rgb(0,160,255)"/><stop offset="0.3201" stop-color="rgb(0,178,255)"/><stop offset="0.3248" stop-color="rgb(0,196,255)"/><stop offset="0.3295" stop-color="rgb(0,213,255)"/><stop offset="0.3342" stop-color="rgb(0,230,255)"/><stop offset="0.3389" stop-color="rgb(0,247,255)"/><stop offset="0.3436" stop-color="rgb(0,255,234)"/><stop offset="0.3483" stop-color="rgb(0,255,192)"/><stop offset="0.3530" stop-color="rgb(0,255,146)"/><stop offset="0.3577" stop-color="rgb(0,255,97)"/><stop offset="0.3624" stop-color="rgb(0,255,40)"/><stop offset="0.3671" stop-color="rgb(15,255,0)"/><stop offset="0.3718" stop-color="rgb(36,255,0)"/><stop offset="0.3766" stop-color="rgb(54,255,0)"/><stop offset="0.3813" stop-color="rgb(70,255,0)"/><stop offset="0.3860" stop-color="rgb(86,255,0)"/><stop offset="0.3907" stop-color="rgb(101,255,0)"/><stop offset="0.3954" stop-color="rgb(115,255,0)"/><stop offset="0.4001" stop-color="rgb(129,255,0)"/><stop offset="0.4048" stop-color="rgb(143,255,0)"/><stop offset="0.4095" stop-color="rgb(156,255,0)"/><stop offset="0.4142" stop-color="rgb(169,255,0)"/><stop offset="0.4189" stop-color="rgb(182,255,0)"/><stop offset="0.4236" stop-color="rgb(195,255,0)"/><stop offset="0.4283" stop-color="rgb(207,255,0)"/><stop offset="0.4330" stop-color="rgb(219,255,0)"/><stop offset="0.4377" stop-color="rgb(231,255,0)"/><stop offset="0.4424" stop-color="rgb(243,255,0)"/><stop offset="0.4472" stop-color="rgb(255,255,0)"/><stop offset="0.4519" stop-color="rgb(255,242,0)"/><stop offset="0.4566" stop-color="rgb(255,230,0)"/><stop offset="0.4613" stop-color="rgb(255,217,0)"/><stop offset="0.4660" stop-color="rgb(255,203,0)"/><stop offset="0.4707" stop-color="rgb(255,190,0)"/><stop offset="0.4754" stop-color="rgb(255,176,0)"/><stop offset="0.4801" stop-color="rgb(255,162,0)"/><stop offset="0.4848" stop-color="rgb(255,148,0)"/><stop offset="0.4895" stop-color="rgb(255,134,0)"/><stop offset="0.4942" stop-color="rgb(255,119,0)"/><stop offset="0.4989" stop-color="rgb(255,103,0)"/><stop offset="0.5036" stop-color="rgb(255,87,0)"/><stop offset="0.5083" stop-color="rgb(255,70,0)"/><stop offset="0.5131" stop-color="rgb(255,52,0)"/><stop offset="0.5178" stop-color="rgb(255,33,0)"/><stop offset="0.5225" stop-color="rgb(255,9,0)"/><stop offset="0.5272" stop-color="rgb(255,0,0)"/><stop offset="0.5319" stop-color="rgb(255,0,0)"/><stop offset="0.5366" stop-color="rgb(255,0,0)"/><stop offset="0.5413" stop-color="rgb(255,0,0)"/><stop offset="0.5460" stop-color="rgb(255,0,0)"/><stop offset="0.5507" stop-color="rgb(255,0,0)"/><stop offset="0.5554" stop-color="rgb(255,0,0)"/><stop offset="0.5601" stop-color="rgb(255,0,0)"/><stop offset="0.5648" stop-color="rgb(255,0,0)"/><stop offset="0.5695" stop-color="rgb(255,0,0)"/><stop offset="0.5742" stop-color="rgb(255,0,0)"/><stop offset="0.5789" stop-color="rgb(255,0,0)"/><stop offset="0.5837" stop-color="rgb(255,0,0)"/><stop offset="0.5884" stop-color="rgb(255,0,0)"/><stop offset="0.5931" stop-color="rgb(248,0,0)"/><stop offset="0.5978" stop-color="rgb(241,0,0)"/><stop offset="0.6025" stop-color="rgb(233,0,0)"/><stop offset="0.6072" stop-color="rgb(226,0,0)"/><stop offset="0.6119" stop-color="rgb(219,0,0)"/><stop offset="0.6166" stop-color="rgb(211,0,0)"/><stop offset="0.6213" stop-color="rgb(204,0,0)"/><stop offset="0.6260" stop-color="rgb(196,0,0)"/><stop offset="0.6307" stop-color="rgb(188,0,0)"/><stop offset="0.6354" stop-color="rgb(181,0,0)"/><stop offset="0.6401" stop-color="rgb(173,0,0)"/><stop offset="0.6448" stop-color="rgb(165,0,0)"/><stop offset="0.6495" stop-color="rgb(157,0,0)"/><stop offset="0.6543" stop-color="rgb(149,0,0)"/><stop offset="0.6590" stop-color="rgb(141,0,0)"/><stop offset="0.6637" stop-color="rgb(132,0,0)"/><stop offset="0.6684" stop-color="rgb(124,0,0)"/><stop offset="0.6731" stop-color="rgb(115,0,0)"/><stop offset="0.6778" stop-color="rgb(106,0,0)"/><stop offset="0.6825" stop-color="rgb(97,0,0)"/><stop offset="0.6872" stop-color="rgb(0,0,0)"/><stop offset="0.6919" stop-color="rgb(0,0,0)"/><stop offset="0.6966" stop-color="rgb(0,0,0)"/><stop offset="0.7013" stop-color="rgb(0,0,0)"/><stop offset="0.7060" stop-color="rgb(0,0,0)"/><stop offset="0.7107" stop-color="rgb(0,0,0)"/><stop offset="0.7154" stop-color="rgb(0,0,0)"/><stop offset="0.7202" stop-color="rgb(0,0,0)"/><stop offset="0.7249" stop-color="rgb(0,0,0)"/><stop offset="0.7296" stop-color="rgb(0,0,0)"/><stop offset="0.7343" stop-color="rgb(0,0,0)"/><stop offset="0.7390" stop-color="rgb(0,0,0)"/><stop offset="0.7437" stop-color="rgb(0,0,0)"/><stop offset="0.7484" stop-color="rgb(0,0,0)"/><stop offset="0.7531" stop-color="rgb(0,0,0)"/><stop offset="0.7578" stop-color="rgb(0,0,0)"/><stop offset="0.7625" stop-color="rgb(0,0,0)"/><stop offset="0.7672" stop-color="rgb(0,0,0)"/><stop offset="0.7719" stop-color="rgb(0,0,0)"/></linearGradient></defs>
<line x1="287.5" y1="163.5" x2="1522.5" y2="163.5" stroke="#d6d0d6" stroke-width="1" stroke-dasharray="4.2 1.9"/>
<line x1="287.5" y1="1069.5" x2="1522.5" y2="1069.5" stroke="#d6d0d6" stroke-width="1" stroke-dasharray="4.2 1.9"/>
<line x1="287.5" y1="163.5" x2="287.5" y2="1069.5" stroke="#d6d0d6" stroke-width="1" stroke-dasharray="5.5 2.5"/>
<line x1="1522.5" y1="163.5" x2="1522.5" y2="1069.5" stroke="#d6d0d6" stroke-width="1" stroke-dasharray="5.5 2.5"/>
<line x1="316.5" y1="164" x2="316.5" y2="1069" stroke="#d6d0d6" stroke-width="1" stroke-dasharray="5.5 2.5"/>
<line x1="455.0" y1="164" x2="455.0" y2="1069" stroke="#d6d0d6" stroke-width="1" stroke-dasharray="5.5 2.5"/>
<line x1="593.5" y1="164" x2="593.5" y2="1069" stroke="#d6d0d6" stroke-width="1" stroke-dasharray="5.5 2.5"/>
<line x1="732.0" y1="164" x2="732.0" y2="1069" stroke="#d6d0d6" stroke-width="1" stroke-dasharray="5.5 2.5"/>
<line x1="870.5" y1="164" x2="870.5" y2="1069" stroke="#d6d0d6" stroke-width="1" stroke-dasharray="5.5 2.5"/>
<line x1="1009.0" y1="164" x2="1009.0" y2="1069" stroke="#d6d0d6" stroke-width="1" stroke-dasharray="5.5 2.5"/>
<line x1="1147.5" y1="164" x2="1147.5" y2="1069" stroke="#d6d0d6" stroke-width="1" stroke-dasharray="5.5 2.5"/>
<line x1="1286.0" y1="164" x2="1286.0" y2="1069" stroke="#d6d0d6" stroke-width="1" stroke-dasharray="5.5 2.5"/>
<line x1="1424.5" y1="164" x2="1424.5" y2="1069" stroke="#d6d0d6" stroke-width="1" stroke-dasharray="5.5 2.5"/>
<line x1="288" y1="1064.5" x2="1522" y2="1064.5" stroke="#d6d0d6" stroke-width="1" stroke-dasharray="4.2 1.9"/>
<line x1="288" y1="953.5" x2="1522" y2="953.5" stroke="#d6d0d6" stroke-width="1" stroke-dasharray="4.2 1.9"/>
<line x1="288" y1="842.5" x2="1522" y2="842.5" stroke="#d6d0d6" stroke-width="1" stroke-dasharray="4.2 1.9"/>
<line x1="288" y1="731.5" x2="1522" y2="731.5" stroke="#d6d0d6" stroke-width="1" stroke-dasharray="4.2 1.9"/>
<line x1="288" y1="620.5" x2="1522" y2="620.5" stroke="#d6d0d6" stroke-width="1" stroke-dasharray="4.2 1.9"/>
<line x1="288" y1="509.5" x2="1522" y2="509.5" stroke="#d6d0d6" stroke-width="1" stroke-dasharray="4.2 1.9"/>
<line x1="288" y1="398.5" x2="1522" y2="398.5" stroke="#d6d0d6" stroke-width="1" stroke-dasharray="4.2 1.9"/>
<line x1="288" y1="287.5" x2="1522" y2="287.5" stroke="#d6d0d6" stroke-width="1" stroke-dasharray="4.2 1.9"/>
<line x1="288" y1="176.5" x2="1522" y2="176.5" stroke="#d6d0d6" stroke-width="1" stroke-dasharray="4.2 1.9"/>
<path d="M316.00 1063.50 C341.20 1063.44 344.80 1063.39 400.00 1063.30 C455.20 1063.21 455.00 1063.26 500.00 1063.20 C545.00 1063.14 529.42 1063.28 550.00 1063.10 C570.58 1062.92 557.44 1063.32 568.60 1062.60 C579.76 1061.88 578.65 1062.20 587.20 1060.70 C595.75 1059.20 591.91 1060.39 597.10 1057.60 C602.29 1054.81 600.42 1056.98 604.50 1051.40 C608.58 1045.82 607.73 1046.41 610.70 1039.00 C613.67 1031.59 611.97 1037.11 614.40 1026.70 C616.83 1016.29 616.37 1018.43 618.80 1004.30 C621.23 990.17 620.78 994.84 622.50 979.60 C624.22 964.36 623.30 967.33 624.52 953.50 C625.74 939.67 625.38 945.50 626.55 933.50 C627.72 921.50 627.35 925.50 628.43 913.50 C629.51 901.50 629.16 905.50 630.16 893.50 C631.16 881.50 630.83 885.50 631.76 873.50 C632.69 861.50 632.39 865.50 633.25 853.50 C634.11 841.50 633.83 845.50 634.64 833.50 C635.45 821.50 635.19 825.50 635.95 813.50 C636.72 801.50 636.47 805.50 637.19 793.50 C637.91 781.50 637.67 785.50 638.36 773.50 C639.05 761.50 638.82 765.50 639.49 753.50 C640.16 741.50 639.93 745.50 640.58 733.50 C641.23 721.50 641.02 725.50 641.65 713.50 C642.28 701.50 642.07 705.50 642.69 693.50 C643.31 681.50 643.11 685.50 643.73 673.50 C644.35 661.50 644.14 665.50 644.76 653.50 C645.38 641.50 645.17 645.50 645.80 633.50 C646.43 621.50 646.22 625.50 646.86 613.50 C647.50 601.50 647.28 605.50 647.93 593.50 C648.58 581.50 648.36 585.50 649.02 573.50 C649.68 561.50 649.46 565.50 650.14 553.50 C650.82 541.50 650.59 545.50 651.29 533.50 C651.99 521.50 651.75 525.50 652.47 513.50 C653.19 501.50 652.95 505.50 653.69 493.50 C654.43 481.50 654.19 485.50 654.95 473.50 C655.72 461.50 655.45 465.50 656.24 453.50 C657.03 441.50 656.76 445.50 657.57 433.50 C658.38 421.50 658.10 425.50 658.93 413.50 C659.76 401.50 659.48 405.50 660.33 393.50 C661.18 381.50 660.89 385.50 661.76 373.50 C662.63 361.50 662.34 365.50 663.22 353.50 C664.11 341.50 663.81 345.50 664.71 333.50 C665.61 321.50 665.31 325.50 666.22 313.50 C667.13 301.50 666.83 305.50 667.74 293.50 C668.65 281.50 668.35 285.50 669.27 273.50 C670.19 261.50 669.89 265.50 670.81 253.50 C671.73 241.50 671.42 245.50 672.34 233.50 C673.26 221.50 672.79 226.40 673.86 213.50 C674.93 200.60 674.93 199.05 675.90 190.50 C676.87 181.95 676.38 185.00 677.10 185.00 C677.82 185.00 677.41 184.50 678.30 190.50 C679.19 196.50 679.26 194.65 680.06 205.00 C680.86 215.35 680.43 213.00 680.95 225.00 C681.47 237.00 681.30 233.00 681.80 245.00 C682.30 257.00 682.14 253.00 682.61 265.00 C683.08 277.00 682.93 273.00 683.38 285.00 C683.83 297.00 683.68 293.00 684.12 305.00 C684.56 317.00 684.41 313.00 684.84 325.00 C685.27 337.00 685.13 333.00 685.54 345.00 C685.95 357.00 685.82 353.00 686.22 365.00 C686.62 377.00 686.49 373.00 686.89 385.00 C687.29 397.00 687.16 393.00 687.56 405.00 C687.96 417.00 687.83 413.00 688.23 425.00 C688.63 437.00 688.50 433.00 688.90 445.00 C689.30 457.00 689.17 453.00 689.58 465.00 C689.99 477.00 689.85 473.00 690.27 485.00 C690.69 497.00 690.55 493.00 690.98 505.00 C691.41 517.00 691.27 513.00 691.71 525.00 C692.15 537.00 692.00 533.00 692.46 545.00 C692.92 557.00 692.77 553.00 693.25 565.00 C693.73 577.00 693.56 573.00 694.06 585.00 C694.55 597.00 694.38 593.00 694.90 605.00 C695.42 617.00 695.24 613.00 695.79 625.00 C696.34 637.00 696.15 633.00 696.72 645.00 C697.29 657.00 697.10 653.00 697.69 665.00 C698.28 677.00 698.08 673.00 698.70 685.00 C699.32 697.00 699.11 693.00 699.77 705.00 C700.43 717.00 700.20 713.00 700.89 725.00 C701.58 737.00 701.34 733.00 702.06 745.00 C702.78 757.00 702.53 753.00 703.29 765.00 C704.05 777.00 703.79 773.00 704.58 785.00 C705.37 797.00 705.10 793.00 705.93 805.00 C706.76 817.00 705.08 804.21 707.35 825.00 C709.62 845.79 710.90 855.79 713.50 874.30 C716.10 892.81 714.65 880.49 716.00 886.70 C717.35 892.91 716.89 891.31 718.00 895.00 C719.11 898.69 718.65 898.85 719.70 899.00 C720.75 899.15 720.00 899.19 721.50 895.50 C723.00 891.81 723.20 893.06 724.70 886.70 C726.20 880.34 724.71 887.71 726.50 874.30 C728.29 860.89 728.73 857.09 730.68 842.00 C732.63 826.91 731.68 834.80 732.99 824.00 C734.30 813.20 733.88 816.80 735.03 806.00 C736.18 795.20 735.81 798.80 736.84 788.00 C737.87 777.20 737.53 780.80 738.45 770.00 C739.37 759.20 739.07 762.80 739.91 752.00 C740.75 741.20 740.47 744.80 741.25 734.00 C742.03 723.20 741.77 726.80 742.52 716.00 C743.27 705.20 743.01 708.80 743.74 698.00 C744.47 687.20 744.22 690.80 744.96 680.00 C745.70 669.20 745.44 672.80 746.22 662.00 C747.00 651.20 746.72 654.80 747.56 644.00 C748.40 633.20 748.10 636.80 749.01 626.00 C749.92 615.20 749.59 618.80 750.61 608.00 C751.63 597.20 751.25 600.80 752.40 590.00 C753.55 579.20 752.87 581.21 754.43 572.00 C755.99 562.79 755.99 563.71 757.60 559.30 C759.21 554.89 758.48 557.30 759.80 557.30 C761.12 557.30 760.58 556.69 762.00 559.30 C763.42 561.91 763.07 558.59 764.54 566.00 C766.01 573.41 765.52 573.20 766.91 584.00 C768.30 594.80 767.83 591.20 769.16 602.00 C770.49 612.80 770.05 609.20 771.35 620.00 C772.65 630.80 772.21 627.20 773.50 638.00 C774.79 648.80 774.35 645.20 775.66 656.00 C776.97 666.80 776.52 663.20 777.87 674.00 C779.22 684.80 778.75 681.20 780.16 692.00 C781.57 702.80 781.08 699.20 782.58 710.00 C784.08 720.80 783.54 717.20 785.15 728.00 C786.75 738.80 786.19 735.20 787.93 746.00 C789.67 756.80 789.05 753.20 790.94 764.00 C792.83 774.80 792.16 771.20 794.23 782.00 C796.30 792.80 795.57 789.20 797.84 800.00 C800.11 810.80 799.31 807.20 801.80 818.00 C804.29 828.80 802.16 822.80 806.15 836.00 C810.14 849.20 808.70 846.79 815.10 862.00 C821.50 877.21 820.42 873.71 827.50 886.70 C834.58 899.69 831.65 896.00 838.70 905.30 C845.75 914.60 845.06 912.60 851.00 917.70 C856.94 922.80 854.00 920.11 858.50 922.30 C863.00 924.49 861.53 926.14 866.00 925.00 C870.47 923.86 869.32 924.41 873.40 918.50 C877.48 912.59 875.52 914.84 879.60 905.30 C883.68 895.76 882.92 899.69 887.00 886.70 C891.08 873.71 890.17 875.41 893.20 862.00 C896.23 848.59 895.32 853.40 897.10 842.00 C898.88 830.60 897.96 834.80 899.13 824.00 C900.30 813.20 899.93 816.80 901.01 806.00 C902.09 795.20 901.74 798.80 902.74 788.00 C903.74 777.20 903.42 780.80 904.34 770.00 C905.26 759.20 904.97 762.80 905.82 752.00 C906.68 741.20 906.40 744.80 907.19 734.00 C907.98 723.20 907.72 726.80 908.46 716.00 C909.20 705.20 908.96 708.80 909.66 698.00 C910.36 687.20 910.13 690.80 910.78 680.00 C911.43 669.20 911.22 672.80 911.84 662.00 C912.46 651.20 912.26 654.80 912.86 644.00 C913.46 633.20 913.26 636.80 913.85 626.00 C914.44 615.20 914.24 618.80 914.82 608.00 C915.40 597.20 915.20 600.80 915.78 590.00 C916.36 579.20 916.16 582.80 916.75 572.00 C917.34 561.20 917.14 564.80 917.74 554.00 C918.34 543.20 918.13 546.80 918.75 536.00 C919.37 525.20 919.17 528.80 919.82 518.00 C920.47 507.20 919.89 512.00 920.93 500.00 C921.97 488.00 922.17 486.52 923.30 478.00 C924.43 469.48 923.89 471.60 924.70 471.60 C925.51 471.60 925.15 472.99 926.00 478.00 C926.85 483.01 926.71 479.81 927.52 488.30 C928.33 496.79 928.03 495.50 928.70 506.30 C929.38 517.10 929.16 513.50 929.77 524.30 C930.38 535.10 930.18 531.50 930.72 542.30 C931.26 553.10 931.09 549.50 931.58 560.30 C932.07 571.10 931.91 567.50 932.35 578.30 C932.79 589.10 932.65 585.50 933.05 596.30 C933.45 607.10 933.32 603.50 933.69 614.30 C934.06 625.10 933.93 621.50 934.27 632.30 C934.61 643.10 934.50 639.50 934.82 650.30 C935.14 661.10 935.03 657.50 935.34 668.30 C935.65 679.10 935.54 675.50 935.84 686.30 C936.14 697.10 936.03 693.50 936.33 704.30 C936.63 715.10 936.53 711.50 936.84 722.30 C937.15 733.10 937.04 729.50 937.36 740.30 C937.68 751.10 937.57 747.50 937.91 758.30 C938.25 769.10 938.13 765.50 938.50 776.30 C938.87 787.10 938.74 783.50 939.15 794.30 C939.56 805.10 939.41 801.50 939.86 812.30 C940.31 823.10 940.15 819.50 940.65 830.30 C941.15 841.10 940.97 837.50 941.52 848.30 C942.07 859.10 941.87 855.50 942.49 866.30 C943.11 877.10 942.89 873.50 943.58 884.30 C944.27 895.10 944.02 891.50 944.78 902.30 C945.54 913.10 945.27 909.50 946.12 920.30 C946.97 931.10 945.76 920.51 947.61 938.30 C949.46 956.09 949.60 960.52 952.30 979.60 C955.00 998.68 953.63 990.77 956.60 1001.90 C959.57 1013.03 957.91 1008.15 962.20 1016.70 C966.49 1025.25 964.21 1023.32 970.90 1030.40 C977.59 1037.48 973.34 1034.54 984.50 1040.30 C995.66 1046.06 991.00 1044.77 1008.10 1049.60 C1025.20 1054.43 1016.96 1053.25 1041.50 1056.40 C1066.04 1059.55 1063.35 1058.42 1089.90 1060.10 C1116.45 1061.78 1106.42 1061.13 1130.00 1062.00 C1153.58 1062.87 1117.50 1062.55 1168.50 1063.00 C1219.50 1063.45 1202.65 1063.35 1300.00 1063.50 C1397.35 1063.65 1435.10 1063.50 1493.00 1063.50 L1493 1064 L316 1064 Z" fill="url(#spec)"/>
<path d="M316.00 1063.50 C341.20 1063.44 344.80 1063.39 400.00 1063.30 C455.20 1063.21 455.00 1063.26 500.00 1063.20 C545.00 1063.14 529.42 1063.28 550.00 1063.10 C570.58 1062.92 557.44 1063.32 568.60 1062.60 C579.76 1061.88 578.65 1062.20 587.20 1060.70 C595.75 1059.20 591.91 1060.39 597.10 1057.60 C602.29 1054.81 600.42 1056.98 604.50 1051.40 C608.58 1045.82 607.73 1046.41 610.70 1039.00 C613.67 1031.59 611.97 1037.11 614.40 1026.70 C616.83 1016.29 616.37 1018.43 618.80 1004.30 C621.23 990.17 620.78 994.84 622.50 979.60 C624.22 964.36 623.30 967.33 624.52 953.50 C625.74 939.67 625.38 945.50 626.55 933.50 C627.72 921.50 627.35 925.50 628.43 913.50 C629.51 901.50 629.16 905.50 630.16 893.50 C631.16 881.50 630.83 885.50 631.76 873.50 C632.69 861.50 632.39 865.50 633.25 853.50 C634.11 841.50 633.83 845.50 634.64 833.50 C635.45 821.50 635.19 825.50 635.95 813.50 C636.72 801.50 636.47 805.50 637.19 793.50 C637.91 781.50 637.67 785.50 638.36 773.50 C639.05 761.50 638.82 765.50 639.49 753.50 C640.16 741.50 639.93 745.50 640.58 733.50 C641.23 721.50 641.02 725.50 641.65 713.50 C642.28 701.50 642.07 705.50 642.69 693.50 C643.31 681.50 643.11 685.50 643.73 673.50 C644.35 661.50 644.14 665.50 644.76 653.50 C645.38 641.50 645.17 645.50 645.80 633.50 C646.43 621.50 646.22 625.50 646.86 613.50 C647.50 601.50 647.28 605.50 647.93 593.50 C648.58 581.50 648.36 585.50 649.02 573.50 C649.68 561.50 649.46 565.50 650.14 553.50 C650.82 541.50 650.59 545.50 651.29 533.50 C651.99 521.50 651.75 525.50 652.47 513.50 C653.19 501.50 652.95 505.50 653.69 493.50 C654.43 481.50 654.19 485.50 654.95 473.50 C655.72 461.50 655.45 465.50 656.24 453.50 C657.03 441.50 656.76 445.50 657.57 433.50 C658.38 421.50 658.10 425.50 658.93 413.50 C659.76 401.50 659.48 405.50 660.33 393.50 C661.18 381.50 660.89 385.50 661.76 373.50 C662.63 361.50 662.34 365.50 663.22 353.50 C664.11 341.50 663.81 345.50 664.71 333.50 C665.61 321.50 665.31 325.50 666.22 313.50 C667.13 301.50 666.83 305.50 667.74 293.50 C668.65 281.50 668.35 285.50 669.27 273.50 C670.19 261.50 669.89 265.50 670.81 253.50 C671.73 241.50 671.42 245.50 672.34 233.50 C673.26 221.50 672.79 226.40 673.86 213.50 C674.93 200.60 674.93 199.05 675.90 190.50 C676.87 181.95 676.38 185.00 677.10 185.00 C677.82 185.00 677.41 184.50 678.30 190.50 C679.19 196.50 679.26 194.65 680.06 205.00 C680.86 215.35 680.43 213.00 680.95 225.00 C681.47 237.00 681.30 233.00 681.80 245.00 C682.30 257.00 682.14 253.00 682.61 265.00 C683.08 277.00 682.93 273.00 683.38 285.00 C683.83 297.00 683.68 293.00 684.12 305.00 C684.56 317.00 684.41 313.00 684.84 325.00 C685.27 337.00 685.13 333.00 685.54 345.00 C685.95 357.00 685.82 353.00 686.22 365.00 C686.62 377.00 686.49 373.00 686.89 385.00 C687.29 397.00 687.16 393.00 687.56 405.00 C687.96 417.00 687.83 413.00 688.23 425.00 C688.63 437.00 688.50 433.00 688.90 445.00 C689.30 457.00 689.17 453.00 689.58 465.00 C689.99 477.00 689.85 473.00 690.27 485.00 C690.69 497.00 690.55 493.00 690.98 505.00 C691.41 517.00 691.27 513.00 691.71 525.00 C692.15 537.00 692.00 533.00 692.46 545.00 C692.92 557.00 692.77 553.00 693.25 565.00 C693.73 577.00 693.56 573.00 694.06 585.00 C694.55 597.00 694.38 593.00 694.90 605.00 C695.42 617.00 695.24 613.00 695.79 625.00 C696.34 637.00 696.15 633.00 696.72 645.00 C697.29 657.00 697.10 653.00 697.69 665.00 C698.28 677.00 698.08 673.00 698.70 685.00 C699.32 697.00 699.11 693.00 699.77 705.00 C700.43 717.00 700.20 713.00 700.89 725.00 C701.58 737.00 701.34 733.00 702.06 745.00 C702.78 757.00 702.53 753.00 703.29 765.00 C704.05 777.00 703.79 773.00 704.58 785.00 C705.37 797.00 705.10 793.00 705.93 805.00 C706.76 817.00 705.08 804.21 707.35 825.00 C709.62 845.79 710.90 855.79 713.50 874.30 C716.10 892.81 714.65 880.49 716.00 886.70 C717.35 892.91 716.89 891.31 718.00 895.00 C719.11 898.69 718.65 898.85 719.70 899.00 C720.75 899.15 720.00 899.19 721.50 895.50 C723.00 891.81 723.20 893.06 724.70 886.70 C726.20 880.34 724.71 887.71 726.50 874.30 C728.29 860.89 728.73 857.09 730.68 842.00 C732.63 826.91 731.68 834.80 732.99 824.00 C734.30 813.20 733.88 816.80 735.03 806.00 C736.18 795.20 735.81 798.80 736.84 788.00 C737.87 777.20 737.53 780.80 738.45 770.00 C739.37 759.20 739.07 762.80 739.91 752.00 C740.75 741.20 740.47 744.80 741.25 734.00 C742.03 723.20 741.77 726.80 742.52 716.00 C743.27 705.20 743.01 708.80 743.74 698.00 C744.47 687.20 744.22 690.80 744.96 680.00 C745.70 669.20 745.44 672.80 746.22 662.00 C747.00 651.20 746.72 654.80 747.56 644.00 C748.40 633.20 748.10 636.80 749.01 626.00 C749.92 615.20 749.59 618.80 750.61 608.00 C751.63 597.20 751.25 600.80 752.40 590.00 C753.55 579.20 752.87 581.21 754.43 572.00 C755.99 562.79 755.99 563.71 757.60 559.30 C759.21 554.89 758.48 557.30 759.80 557.30 C761.12 557.30 760.58 556.69 762.00 559.30 C763.42 561.91 763.07 558.59 764.54 566.00 C766.01 573.41 765.52 573.20 766.91 584.00 C768.30 594.80 767.83 591.20 769.16 602.00 C770.49 612.80 770.05 609.20 771.35 620.00 C772.65 630.80 772.21 627.20 773.50 638.00 C774.79 648.80 774.35 645.20 775.66 656.00 C776.97 666.80 776.52 663.20 777.87 674.00 C779.22 684.80 778.75 681.20 780.16 692.00 C781.57 702.80 781.08 699.20 782.58 710.00 C784.08 720.80 783.54 717.20 785.15 728.00 C786.75 738.80 786.19 735.20 787.93 746.00 C789.67 756.80 789.05 753.20 790.94 764.00 C792.83 774.80 792.16 771.20 794.23 782.00 C796.30 792.80 795.57 789.20 797.84 800.00 C800.11 810.80 799.31 807.20 801.80 818.00 C804.29 828.80 802.16 822.80 806.15 836.00 C810.14 849.20 808.70 846.79 815.10 862.00 C821.50 877.21 820.42 873.71 827.50 886.70 C834.58 899.69 831.65 896.00 838.70 905.30 C845.75 914.60 845.06 912.60 851.00 917.70 C856.94 922.80 854.00 920.11 858.50 922.30 C863.00 924.49 861.53 926.14 866.00 925.00 C870.47 923.86 869.32 924.41 873.40 918.50 C877.48 912.59 875.52 914.84 879.60 905.30 C883.68 895.76 882.92 899.69 887.00 886.70 C891.08 873.71 890.17 875.41 893.20 862.00 C896.23 848.59 895.32 853.40 897.10 842.00 C898.88 830.60 897.96 834.80 899.13 824.00 C900.30 813.20 899.93 816.80 901.01 806.00 C902.09 795.20 901.74 798.80 902.74 788.00 C903.74 777.20 903.42 780.80 904.34 770.00 C905.26 759.20 904.97 762.80 905.82 752.00 C906.68 741.20 906.40 744.80 907.19 734.00 C907.98 723.20 907.72 726.80 908.46 716.00 C909.20 705.20 908.96 708.80 909.66 698.00 C910.36 687.20 910.13 690.80 910.78 680.00 C911.43 669.20 911.22 672.80 911.84 662.00 C912.46 651.20 912.26 654.80 912.86 644.00 C913.46 633.20 913.26 636.80 913.85 626.00 C914.44 615.20 914.24 618.80 914.82 608.00 C915.40 597.20 915.20 600.80 915.78 590.00 C916.36 579.20 916.16 582.80 916.75 572.00 C917.34 561.20 917.14 564.80 917.74 554.00 C918.34 543.20 918.13 546.80 918.75 536.00 C919.37 525.20 919.17 528.80 919.82 518.00 C920.47 507.20 919.89 512.00 920.93 500.00 C921.97 488.00 922.17 486.52 923.30 478.00 C924.43 469.48 923.89 471.60 924.70 471.60 C925.51 471.60 925.15 472.99 926.00 478.00 C926.85 483.01 926.71 479.81 927.52 488.30 C928.33 496.79 928.03 495.50 928.70 506.30 C929.38 517.10 929.16 513.50 929.77 524.30 C930.38 535.10 930.18 531.50 930.72 542.30 C931.26 553.10 931.09 549.50 931.58 560.30 C932.07 571.10 931.91 567.50 932.35 578.30 C932.79 589.10 932.65 585.50 933.05 596.30 C933.45 607.10 933.32 603.50 933.69 614.30 C934.06 625.10 933.93 621.50 934.27 632.30 C934.61 643.10 934.50 639.50 934.82 650.30 C935.14 661.10 935.03 657.50 935.34 668.30 C935.65 679.10 935.54 675.50 935.84 686.30 C936.14 697.10 936.03 693.50 936.33 704.30 C936.63 715.10 936.53 711.50 936.84 722.30 C937.15 733.10 937.04 729.50 937.36 740.30 C937.68 751.10 937.57 747.50 937.91 758.30 C938.25 769.10 938.13 765.50 938.50 776.30 C938.87 787.10 938.74 783.50 939.15 794.30 C939.56 805.10 939.41 801.50 939.86 812.30 C940.31 823.10 940.15 819.50 940.65 830.30 C941.15 841.10 940.97 837.50 941.52 848.30 C942.07 859.10 941.87 855.50 942.49 866.30 C943.11 877.10 942.89 873.50 943.58 884.30 C944.27 895.10 944.02 891.50 944.78 902.30 C945.54 913.10 945.27 909.50 946.12 920.30 C946.97 931.10 945.76 920.51 947.61 938.30 C949.46 956.09 949.60 960.52 952.30 979.60 C955.00 998.68 953.63 990.77 956.60 1001.90 C959.57 1013.03 957.91 1008.15 962.20 1016.70 C966.49 1025.25 964.21 1023.32 970.90 1030.40 C977.59 1037.48 973.34 1034.54 984.50 1040.30 C995.66 1046.06 991.00 1044.77 1008.10 1049.60 C1025.20 1054.43 1016.96 1053.25 1041.50 1056.40 C1066.04 1059.55 1063.35 1058.42 1089.90 1060.10 C1116.45 1061.78 1106.42 1061.13 1130.00 1062.00 C1153.58 1062.87 1117.50 1062.55 1168.50 1063.00 C1219.50 1063.45 1202.65 1063.35 1300.00 1063.50 C1397.35 1063.65 1435.10 1063.50 1493.00 1063.50" fill="none" stroke="#8c9a28" stroke-width="1.1" opacity="0.85"/>
<line x1="316" y1="1063.5" x2="1493" y2="1063.5" stroke="#a6b63a" stroke-width="2.6"/>
<line x1="316" y1="1063.5" x2="610" y2="1063.5" stroke="#4e5a18" stroke-width="2" opacity=".55" stroke-dasharray="1.2 8.5 1.4 9.2 1.9 2.8 0.8 12.0 1.2 4.8 2.5 7.6 2.2 7.7 1.9 3.8 1.9 12.4 1.7 10.9 1.9 2.8 2.1 9.1 1.3 2.4 2.3 7.7 2.0 12.5 2.0 13.1 1.5 11.6 1.6 13.2 2.3 3.2 1.0 4.6 2.4 7.2 1.9 5.6 1.7 6.6 1.4 9.0 1.8 12.9 2.0 13.1 2.3 13.9 1.9 4.0 2.3 13.6 2.3 8.8 2.0 4.5 2.2 8.9 1.3 2.8 2.3 13.9 1.0 11.6 1.5 3.8 1.3 11.2 2.3 2.5 1.8 2.5 2.0 6.0 2.3 13.8 1.7 14.0 1.3 2.9 1.8 2.4 1.1 6.9 1.8 3.9 0.9 12.4 1.3 13.5 2.3 6.5 1.6 8.2 1.9 9.1 1.8 9.4 2.4 8.1 1.5 10.6 1.2 5.6 2.5 8.3 1.7 2.1 1.5 9.0 0.8 9.4 1.9 2.7"/>
<line x1="1100" y1="1063.5" x2="1493" y2="1063.5" stroke="#4e5a18" stroke-width="2" opacity=".45" stroke-dasharray="2.7 1.9 9.4 0.8 9.0 1.5 2.1 1.7 8.3 2.5 5.6 1.2 10.6 1.5 8.1 2.4 9.4 1.8 9.1 1.9 8.2 1.6 6.5 2.3 13.5 1.3 12.4 0.9 3.9 1.8 6.9 1.1 2.4 1.8 2.9 1.3 14.0 1.7 13.8 2.3 6.0 2.0 2.5 1.8 2.5 2.3 11.2 1.3 3.8 1.5 11.6 1.0 13.9 2.3 2.8 1.3 8.9 2.2 4.5 2.0 8.8 2.3 13.6 2.3 4.0 1.9 13.9 2.3 13.1 2.0 12.9 1.8 9.0 1.4 6.6 1.7 5.6 1.9 7.2 2.4 4.6 1.0 3.2 2.3 13.2 1.6 11.6 1.5 13.1 2.0 12.5 2.0 7.7 2.3 2.4 1.3 9.1 2.1 2.8 1.9 10.9 1.7 12.4 1.9 3.8 1.9 7.7 2.2 7.6 2.5 4.8 1.2 12.0 0.8 2.8 1.9 9.2 1.4 8.5 1.2"/>
</svg>
<div class="t" style="left:244px;top:147px;font-weight:bold;font-size:12.5px;line-height:14px;color:#111">mW/m²/nm</div>
<div class="t" style="left:231px;width:50px;text-align:right;top:1057px;font-weight:bold;font-size:12.5px;line-height:14px;color:#111">0</div>
<div class="t" style="left:231px;width:50px;text-align:right;top:946px;font-weight:bold;font-size:12.5px;line-height:14px;color:#111">100</div>
<div class="t" style="left:231px;width:50px;text-align:right;top:835px;font-weight:bold;font-size:12.5px;line-height:14px;color:#111">200</div>
<div class="t" style="left:231px;width:50px;text-align:right;top:724px;font-weight:bold;font-size:12.5px;line-height:14px;color:#111">300</div>
<div class="t" style="left:231px;width:50px;text-align:right;top:613px;font-weight:bold;font-size:12.5px;line-height:14px;color:#111">400</div>
<div class="t" style="left:231px;width:50px;text-align:right;top:502px;font-weight:bold;font-size:12.5px;line-height:14px;color:#111">500</div>
<div class="t" style="left:231px;width:50px;text-align:right;top:391px;font-weight:bold;font-size:12.5px;line-height:14px;color:#111">600</div>
<div class="t" style="left:231px;width:50px;text-align:right;top:280px;font-weight:bold;font-size:12.5px;line-height:14px;color:#111">700</div>
<div class="t" style="left:231px;width:50px;text-align:right;top:169px;font-weight:bold;font-size:12.5px;line-height:14px;color:#111">800</div>
<div class="t" style="left:286.0px;width:60px;text-align:center;top:1074px;font-weight:bold;font-size:12.5px;line-height:14px;color:#111">200</div>
<div class="t" style="left:424.5px;width:60px;text-align:center;top:1074px;font-weight:bold;font-size:12.5px;line-height:14px;color:#111">300</div>
<div class="t" style="left:563.0px;width:60px;text-align:center;top:1074px;font-weight:bold;font-size:12.5px;line-height:14px;color:#111">400</div>
<div class="t" style="left:701.5px;width:60px;text-align:center;top:1074px;font-weight:bold;font-size:12.5px;line-height:14px;color:#111">500</div>
<div class="t" style="left:840.0px;width:60px;text-align:center;top:1074px;font-weight:bold;font-size:12.5px;line-height:14px;color:#111">600</div>
<div class="t" style="left:978.5px;width:60px;text-align:center;top:1074px;font-weight:bold;font-size:12.5px;line-height:14px;color:#111">700</div>
<div class="t" style="left:1117.0px;width:60px;text-align:center;top:1074px;font-weight:bold;font-size:12.5px;line-height:14px;color:#111">800</div>
<div class="t" style="left:1255.5px;width:60px;text-align:center;top:1074px;font-weight:bold;font-size:12.5px;line-height:14px;color:#111">900</div>
<div class="t" style="left:1394.0px;width:60px;text-align:center;top:1074px;font-weight:bold;font-size:12.5px;line-height:14px;color:#111">1000</div>
<div class="t" style="left:1532px;top:1074px;font-weight:bold;font-size:12.5px;line-height:14px;color:#111">nm</div>
<div class="a" style="left:1580px;top:87.5px;width:468px;height:23px;background:#a9a8aa"></div>
<div class="t" style="left:1584px;top:91px;color:#111">Results</div>
<svg class="a" style="left:2016px;top:93px" width="10" height="10" viewBox="0 0 10 10"><path d="M3 1.5H8.5V7" fill="none" stroke="#111" stroke-width="1.6"/><rect x="1.2" y="3.8" width="5.2" height="5" fill="none" stroke="#111" stroke-width="1.6"/></svg><svg class="a" style="left:2033px;top:93px" width="10" height="10" viewBox="0 0 10 10"><path d="M1 1L9 9M9 1L1 9" stroke="#111" stroke-width="1.6"/></svg>
<div class="t" style="left:1585px;top:119px;color:#111">Norm</div>
<div class="a" style="left:1673px;top:114.5px;width:371px;height:21px;background:#c9c8c9"></div>
<div class="t" style="left:1676px;top:119px;color:#a0a0a0">CIE</div>
<svg class="a" style="left:2029px;top:122px" width="8" height="5" viewBox="0 0 8 5"><path d="M0 0H8L4 5Z" fill="#a8a8a8"/></svg>
<div class="t" style="left:1585px;top:139px;color:#111">Range Min</div>
<div class="a" style="left:1673px;top:137px;width:371px;height:18px;background:#efeef0;border:1px solid #d8d8d8;border-top-color:#e8e8e8"></div>
<div class="t" style="left:1676px;top:139px;color:#a4a4a4">200,00</div>
<svg class="a" style="left:2029px;top:140px" width="8" height="13" viewBox="0 0 8 13"><path d="M0.5 5L4 1.5L7.5 5Z M0.5 8L4 11.5L7.5 8Z" fill="#777"/></svg>
<div class="t" style="left:1585px;top:158px;color:#111">Range Max</div>
<div class="a" style="left:1673px;top:156px;width:371px;height:18px;background:#efeef0;border:1px solid #d8d8d8;border-top-color:#e8e8e8"></div>
<div class="t" style="left:1676px;top:158px;color:#a4a4a4">1050,00</div>
<svg class="a" style="left:2029px;top:159px" width="8" height="13" viewBox="0 0 8 13"><path d="M0.5 5L4 1.5L7.5 5Z M0.5 8L4 11.5L7.5 8Z" fill="#777"/></svg>
<div class="a" style="left:1586.5px;top:176px;width:13px;height:13px;background:#fff;border:1px solid #dcdcdc"></div>
<div class="t" style="left:1604px;top:177px;color:#a0a0a0">Lock range</div>
<div class="a" style="left:1674px;top:176px;width:370px;height:20px;background:#c9c8c9"></div>
<div class="t" style="left:1674px;width:370px;text-align:center;top:180px;color:#9c9c9c">Reset range</div>
<div class="t" style="left:1585px;top:203px;color:#111">Ranges</div>
<div class="a" style="left:1673px;top:199.5px;width:371px;height:20px;background:#c9c8c9"></div>
<div class="t" style="left:1676px;top:203px;color:#a0a0a0">400-500</div>
<svg class="a" style="left:2029px;top:207px" width="8" height="5" viewBox="0 0 8 5"><path d="M0 0H8L4 5Z" fill="#a8a8a8"/></svg>
<div class="a" style="left:1580px;top:226.5px;width:468px;height:875px;background:#fff;border:1px solid #9c9c9c"></div>
<div class="t" style="left:1584px;top:232px;color:#111">Name</div>
<div class="a" style="left:1766px;top:229px;width:1px;height:20px;background:#f2f2f2"></div>
<div class="t" style="left:1771px;top:232px;color:#111">Value</div>
<svg class="a" style="left:1586px;top:253.5px" width="10" height="8" viewBox="0 0 10 8"><path d="M1 2L5 6L9 2" fill="none" stroke="#222" stroke-width="1.5"/></svg>
<div class="t" style="left:1604px;top:250.5px;color:#111">Results</div>
<div class="a" style="left:1584px;top:265.5px;width:461px;height:16px;background:#f6f6f6"></div>
<svg class="a" style="left:1609px;top:268.5px" width="8" height="10" viewBox="0 0 8 10"><path d="M2 1L6 5L2 9" fill="none" stroke="#8a8a8a" stroke-width="1.3"/></svg>
<div class="t" style="left:1625px;top:266.5px;color:#111">CIE 1931 2° observer</div>
<svg class="a" style="left:1609px;top:284.5px" width="8" height="10" viewBox="0 0 8 10"><path d="M2 1L6 5L2 9" fill="none" stroke="#8a8a8a" stroke-width="1.3"/></svg>
<div class="t" style="left:1625px;top:282.5px;color:#111">CIE 1964 10° observer</div>
<div class="a" style="left:1584px;top:297.5px;width:461px;height:16px;background:#f6f6f6"></div>
<svg class="a" style="left:1609px;top:300.5px" width="8" height="10" viewBox="0 0 8 10"><path d="M2 1L6 5L2 9" fill="none" stroke="#8a8a8a" stroke-width="1.3"/></svg>
<div class="t" style="left:1625px;top:298.5px;color:#111">Other</div>
<svg class="a" style="left:1609px;top:316.5px" width="8" height="10" viewBox="0 0 8 10"><path d="M2 1L6 5L2 9" fill="none" stroke="#8a8a8a" stroke-width="1.3"/></svg>
<div class="t" style="left:1625px;top:314.5px;color:#111">Photobiological Safety</div>
<div class="a" style="left:1584px;top:329.5px;width:461px;height:16px;background:#f6f6f6"></div>
<svg class="a" style="left:1607px;top:333.5px" width="10" height="8" viewBox="0 0 10 8"><path d="M1 2L5 6L9 2" fill="none" stroke="#222" stroke-width="1.5"/></svg>
<div class="t" style="left:1625px;top:330.5px;color:#111">Rendering Indices</div>
<div class="t" style="left:1646px;top:346.5px;color:#111">Ra</div>
<div class="t" style="left:1771px;top:346.5px;color:#111">79,2</div>
<div class="a" style="left:1584px;top:361.5px;width:461px;height:16px;background:#f6f6f6"></div>
<div class="t" style="left:1646px;top:362.5px;color:#111">R₁</div>
<div class="t" style="left:1771px;top:362.5px;color:#111">73,9</div>
<div class="t" style="left:1646px;top:378.5px;color:#111">R₂</div>
<div class="t" style="left:1771px;top:378.5px;color:#111">93,0</div>
<div class="a" style="left:1584px;top:393.5px;width:461px;height:16px;background:#f6f6f6"></div>
<div class="t" style="left:1646px;top:394.5px;color:#111">R₃</div>
<div class="t" style="left:1771px;top:394.5px;color:#111">79,7</div>
<div class="t" style="left:1646px;top:410.5px;color:#111">R₄</div>
<div class="t" style="left:1771px;top:410.5px;color:#111">76,8</div>
<div class="a" style="left:1584px;top:425.5px;width:461px;height:16px;background:#f6f6f6"></div>
<div class="t" style="left:1646px;top:426.5px;color:#111">R₅</div>
<div class="t" style="left:1771px;top:426.5px;color:#111">83,2</div>
<div class="t" style="left:1646px;top:442.5px;color:#111">R₆</div>
<div class="t" style="left:1771px;top:442.5px;color:#111">95,1</div>
<div class="a" style="left:1584px;top:457.5px;width:461px;height:16px;background:#f6f6f6"></div>
<div class="t" style="left:1646px;top:458.5px;color:#111">R₇</div>
<div class="t" style="left:1771px;top:458.5px;color:#111">82,0</div>
<div class="t" style="left:1646px;top:474.5px;color:#111">R₈</div>
<div class="t" style="left:1771px;top:474.5px;color:#111">49,7</div>
<div class="a" style="left:1584px;top:489.5px;width:461px;height:16px;background:#f6f6f6"></div>
<div class="t" style="left:1646px;top:490.5px;color:#111">R₉</div>
<div class="t" style="left:1771px;top:490.5px;color:#111">-60,3</div>
<div class="t" style="left:1646px;top:506.5px;color:#111">R₁₀</div>
<div class="t" style="left:1771px;top:506.5px;color:#111">88,9</div>
<div class="a" style="left:1584px;top:521.5px;width:461px;height:16px;background:#f6f6f6"></div>
<div class="t" style="left:1646px;top:522.5px;color:#111">R₁₁</div>
<div class="t" style="left:1771px;top:522.5px;color:#111">67,6</div>
<div class="t" style="left:1646px;top:538.5px;color:#111">R₁₂</div>
<div class="t" style="left:1771px;top:538.5px;color:#111">71,2</div>
<div class="a" style="left:1584px;top:553.5px;width:461px;height:16px;background:#f6f6f6"></div>
<div class="t" style="left:1646px;top:554.5px;color:#111">R₁₃</div>
<div class="t" style="left:1771px;top:554.5px;color:#111">77,5</div>
<div class="t" style="left:1646px;top:570.5px;color:#111">R₁₄</div>
<div class="t" style="left:1771px;top:570.5px;color:#111">86,7</div>
<div class="a" style="left:1584px;top:585.5px;width:461px;height:16px;background:#f6f6f6"></div>
<div class="t" style="left:1646px;top:586.5px;color:#111">R₁₅</div>
<div class="t" style="left:1771px;top:586.5px;color:#111">59,6</div>
<svg class="a" style="left:1609px;top:604.5px" width="8" height="10" viewBox="0 0 8 10"><path d="M2 1L6 5L2 9" fill="none" stroke="#8a8a8a" stroke-width="1.3"/></svg>
<div class="t" style="left:1625px;top:602.5px;color:#111">Metamerism Indices</div>
<div class="a" style="left:1584px;top:617.5px;width:461px;height:16px;background:#f6f6f6"></div>
<svg class="a" style="left:1609px;top:620.5px" width="8" height="10" viewBox="0 0 8 10"><path d="M2 1L6 5L2 9" fill="none" stroke="#8a8a8a" stroke-width="1.3"/></svg>
<div class="t" style="left:1625px;top:618.5px;color:#111">TM-30-15 Main</div>
<svg class="a" style="left:1609px;top:636.5px" width="8" height="10" viewBox="0 0 8 10"><path d="M2 1L6 5L2 9" fill="none" stroke="#8a8a8a" stroke-width="1.3"/></svg>
<div class="t" style="left:1625px;top:634.5px;color:#111">TM-30-15 Hue Bin Fidelit...</div>
<div class="a" style="left:1584px;top:649.5px;width:461px;height:16px;background:#f6f6f6"></div>
<svg class="a" style="left:1609px;top:652.5px" width="8" height="10" viewBox="0 0 8 10"><path d="M2 1L6 5L2 9" fill="none" stroke="#8a8a8a" stroke-width="1.3"/></svg>
<div class="t" style="left:1625px;top:650.5px;color:#111">TM-30-15 Hue Bin Chang...</div>
<svg class="a" style="left:1609px;top:668.5px" width="8" height="10" viewBox="0 0 8 10"><path d="M2 1L6 5L2 9" fill="none" stroke="#8a8a8a" stroke-width="1.3"/></svg>
<div class="t" style="left:1625px;top:666.5px;color:#111">TM-30-15 Fidelity Index ...</div>
<div class="a" style="left:1584px;top:681.5px;width:461px;height:16px;background:#f6f6f6"></div>
<svg class="a" style="left:1607px;top:685.5px" width="10" height="8" viewBox="0 0 10 8"><path d="M1 2L5 6L9 2" fill="none" stroke="#222" stroke-width="1.5"/></svg>
<div class="t" style="left:1625px;top:682.5px;color:#111">Human Centric Lighting</div>
<div class="t" style="left:1646px;top:698.5px;color:#111">EML</div>
<div class="t" style="left:1771px;top:698.5px;color:#111">-</div>
<div class="a" style="left:1584px;top:713.5px;width:461px;height:16px;background:#f6f6f6"></div>
<div class="t" style="left:1646px;top:714.5px;color:#111">Melanopic ratio</div>
<div class="t" style="left:1771px;top:714.5px;color:#111">-</div>
<div class="a" style="left:0;top:1102px;width:2048px;height:26px;background:#f0eff0"></div>
<div class="a" style="left:325px;top:1103px;width:1px;height:24px;background:#dcdcdc"></div>
<div class="a" style="left:329px;top:1105px;width:1660px;height:23px;background:#e9e8e9;border:1px solid #d4d4d4;border-bottom:none"></div>
<div class="t" style="left:1997px;top:1110px;color:#111">0%</div>
<div class="a" style="left:2027px;top:1103px;width:1px;height:24px;background:#dcdcdc"></div>
<div class="a" style="left:0;top:1128px;width:51px;height:2px;background:#333"></div>
<div class="a" style="left:418px;top:1128px;width:1630px;height:2px;background:#444"></div>
</div></body></html>
